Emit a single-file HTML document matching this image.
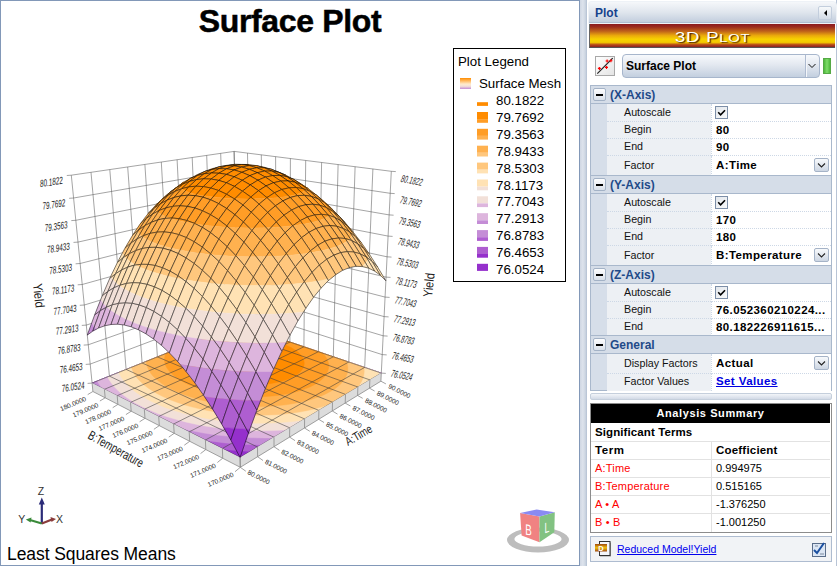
<!DOCTYPE html>
<html><head><meta charset="utf-8">
<style>
*{box-sizing:border-box}
html,body{margin:0;padding:0;width:837px;height:566px;overflow:hidden;background:#fff;font-family:"Liberation Sans",sans-serif}
.abs{position:absolute}
#plot{position:absolute;left:0;top:0;width:580px;height:566px;border:1px solid #8298b8;background:#fff}
#split{position:absolute;left:580px;top:0;width:7px;height:566px;background:linear-gradient(90deg,#cfd7e3 0,#dde3ec 40%,#cdd6e2 75%,#b3c0d2 100%)}
#panel{position:absolute;left:588px;top:0;width:249px;height:566px;background:#fff;border-right:1px solid #b8c4d6}
svg text{font-family:"Liberation Sans",sans-serif}
.g{stroke:#5a5a5a;stroke-width:.55;fill:none}
.fg{stroke:#383838;stroke-width:.55;fill:none}
.bs{stroke:#8a8a8a;stroke-width:.8;fill:none}
.b0{fill:#FF8C00;stroke:#FF8C00;stroke-width:.4}.b1{fill:#FF9D26;stroke:#FF9D26;stroke-width:.4}.b2{fill:#FFB14F;stroke:#FFB14F;stroke-width:.4}.b3{fill:#FFC77D;stroke:#FFC77D;stroke-width:.4}.b4{fill:#FFE2B4;stroke:#FFE2B4;stroke-width:.4}.b5{fill:#F2E0D8;stroke:#F2E0D8;stroke-width:.4}.b6{fill:#DDB5DD;stroke:#DDB5DD;stroke-width:.4}.b7{fill:#C48DD6;stroke:#C48DD6;stroke-width:.4}.b8{fill:#AE5ED0;stroke:#AE5ED0;stroke-width:.4}.b9{fill:#9530CC;stroke:#9530CC;stroke-width:.4}
.s{stroke:#000;stroke-width:.5;stroke-linejoin:round}
.o{fill:none}
.lbl{font-size:11px;color:#222;position:absolute;white-space:nowrap}
.mb{width:13px;height:13px;border:1px solid #a3b2c6;border-radius:2px;background:linear-gradient(#fdfdfe,#d9e0ea)}
.mb:after{content:"";position:absolute;left:2px;top:5px;width:7px;height:2px;background:#000}
.cat{font-size:12px;font-weight:bold;color:#1f4a88;white-space:nowrap}
.pl{font-size:10.7px;color:#111;white-space:nowrap}
.pv{font-size:11.5px;font-weight:bold;letter-spacing:.4px;color:#000;white-space:nowrap}
.ck{width:13px;height:13px;border:1px solid #7d8fa8;background:linear-gradient(135deg,#e3e7ec,#f8f9fa)}
.ddb{width:15px;height:14px;border:1px solid #a5b3c7;border-radius:2px;background:linear-gradient(#f8fafc,#cdd6e3)}
</style></head><body>
<div id="plot"></div>
<svg class="abs" style="left:0;top:0" width="580" height="566" viewBox="0 0 580 566">
<path fill="#fff" d="M71.3 175.2 234.1 151.4 238.2 324.5 92.1 383.1Z"/><path fill="#fff" d="M234.1 151.4 391.3 171.3 381.3 373.1 238.2 324.5Z"/>
<path class="g" d="M92.1 383.1L71.3 175.2"/>
<path class="g" d="M92.1 383.1L238.2 324.5"/>
<path class="g" d="M238.2 324.5L234.1 151.4"/>
<path class="g" d="M238.2 324.5L381.3 373.1"/>
<path class="g" d="M92.1 383.1L87.6 383.4"/>
<path class="g" d="M381.3 373.1L385.8 373.4"/>
<path class="g" d="M109.4 376.1L91 172.3"/>
<path class="g" d="M90.2 364.1L237.8 308.4"/>
<path class="g" d="M250.5 328.7L247.5 153.1"/>
<path class="g" d="M237.8 308.4L382.2 354.6"/>
<path class="g" d="M90.2 364.1L85.7 364.4"/>
<path class="g" d="M382.2 354.6L386.7 354.9"/>
<path class="g" d="M126.1 369.4L109.8 169.6"/>
<path class="g" d="M88.2 344.8L237.4 292.1"/>
<path class="g" d="M263.3 333L261.3 154.8"/>
<path class="g" d="M237.4 292.1L383.1 335.8"/>
<path class="g" d="M88.2 344.8L83.7 345.1"/>
<path class="g" d="M383.1 335.8L387.6 336.1"/>
<path class="g" d="M142.1 363L127.7 167"/>
<path class="g" d="M86.3 325.1L237 275.5"/>
<path class="g" d="M276.4 337.5L275.6 156.7"/>
<path class="g" d="M237 275.5L384.1 316.6"/>
<path class="g" d="M86.3 325.1L81.8 325.4"/>
<path class="g" d="M384.1 316.6L388.6 316.9"/>
<path class="g" d="M157.4 356.9L144.9 164.5"/>
<path class="g" d="M84.3 305L236.6 258.7"/>
<path class="g" d="M289.9 342.1L290.4 158.5"/>
<path class="g" d="M236.6 258.7L385.1 297.1"/>
<path class="g" d="M84.3 305L79.8 305.3"/>
<path class="g" d="M385.1 297.1L389.6 297.4"/>
<path class="g" d="M172.2 351L161.3 162"/>
<path class="g" d="M82.2 284.5L236.2 241.6"/>
<path class="g" d="M303.9 346.8L305.7 160.5"/>
<path class="g" d="M236.2 241.6L386 277.1"/>
<path class="g" d="M82.2 284.5L77.7 284.8"/>
<path class="g" d="M386 277.1L390.5 277.4"/>
<path class="g" d="M186.4 345.3L177.1 159.7"/>
<path class="g" d="M80.1 263.5L235.8 224.1"/>
<path class="g" d="M318.4 351.7L321.6 162.5"/>
<path class="g" d="M235.8 224.1L387 256.8"/>
<path class="g" d="M80.1 263.5L75.6 263.8"/>
<path class="g" d="M387 256.8L391.5 257.1"/>
<path class="g" d="M200.1 339.8L192.2 157.5"/>
<path class="g" d="M78 242.1L235.4 206.4"/>
<path class="g" d="M333.3 356.8L338.1 164.5"/>
<path class="g" d="M235.4 206.4L388.1 236.1"/>
<path class="g" d="M78 242.1L73.5 242.4"/>
<path class="g" d="M388.1 236.1L392.6 236.4"/>
<path class="g" d="M213.2 334.5L206.7 155.4"/>
<path class="g" d="M75.8 220.3L235 188.4"/>
<path class="g" d="M348.8 362L355.1 166.7"/>
<path class="g" d="M235 188.4L389.1 214.9"/>
<path class="g" d="M75.8 220.3L71.3 220.6"/>
<path class="g" d="M389.1 214.9L393.6 215.2"/>
<path class="g" d="M225.9 329.4L220.7 153.4"/>
<path class="g" d="M73.6 198L234.5 170.1"/>
<path class="g" d="M364.7 367.4L372.9 168.9"/>
<path class="g" d="M234.5 170.1L390.2 193.3"/>
<path class="g" d="M73.6 198L69.1 198.3"/>
<path class="g" d="M390.2 193.3L394.7 193.6"/>
<path class="g" d="M238.2 324.5L234.1 151.4"/>
<path class="g" d="M71.3 175.2L234.1 151.4"/>
<path class="g" d="M381.3 373.1L391.3 171.3"/>
<path class="g" d="M234.1 151.4L391.3 171.3"/>
<path class="g" d="M71.3 175.2L66.8 175.5"/>
<path class="g" d="M391.3 171.3L395.8 171.6"/>
<path class="b9" d="M240.1 457.4 381.3 373.1 238.2 324.5 92.1 383.1Z"/>
<path class="b8" d="M92.1 383.1 224.4 449.5 237.6 450.7 250.3 451.4 381.3 373.1 238.2 324.5Z"/>
<path class="b7" d="M92.1 383.1 206.3 440.4 211.4 441.2 224.7 442.9 238.2 444 251.9 444.7 261.1 444.9 381.3 373.1 238.2 324.5Z"/>
<path class="b6" d="M97.1 381.1 99.6 385.1 101.8 388 183.4 428.9 190.6 430.6 202.2 432.8 214.2 434.7 226.4 436.1 238.9 437.2 251.4 437.8 263.9 438 272.8 437.9 381.3 373.1 238.2 324.5Z"/>
<path class="b5" d="M107.6 376.9 108.6 379 111.3 383 114.6 387.1 118.7 391.2 123.5 395.2 128.9 399.1 135.1 402.9 141.9 406.5 149.4 410 157.6 413.4 166.3 416.5 175.6 419.3 185.3 421.9 195.6 424.2 206.1 426.2 217 427.8 228.2 429.1 239.5 430 250.9 430.6 262.2 430.8 273.5 430.6 284.6 430.1 286.1 429.9 381.3 373.1 238.2 324.5Z"/>
<path class="b4" d="M118.9 372.3 119.3 373.4 121.2 377.1 123.8 380.8 127 384.5 130.8 388.1 135.2 391.7 140.3 395.2 146 398.6 152.2 401.8 159.1 405 166.5 407.9 174.4 410.6 182.8 413.1 191.6 415.4 200.8 417.4 210.3 419.2 220 420.6 230 421.8 240.1 422.6 250.3 423.1 260.5 423.3 270.6 423.1 280.5 422.6 290.3 421.8 299.7 420.7 302.3 420.3 378.7 374.6 378.8 373.6 378.7 372.2 238.2 324.5Z"/>
<path class="b3" d="M131.5 367.3 131.8 368.6 133.2 371.9 135 375.1 137.5 378.4 140.4 381.6 143.9 384.8 148 387.9 152.6 391 157.7 393.9 163.3 396.8 169.4 399.5 176 402 183 404.4 190.4 406.6 198.2 408.5 206.3 410.3 214.6 411.8 223.2 413 232 414 240.8 414.7 249.8 415.1 258.7 415.3 267.5 415.1 276.2 414.7 284.8 414 293.1 413 301.1 411.8 308.7 410.3 316 408.6 322.9 406.6 328 404.9 357.3 387.4 359.4 384.9 361.4 381.7 362.9 378.5 363.8 375.2 364.2 372 364.1 368.7 363.7 367.1 238.2 324.5Z"/>
<path class="b2" d="M146.2 361.4 146.2 361.8 146.6 364.5 147.5 367.3 148.8 370.1 150.5 372.9 152.7 375.7 155.4 378.4 158.5 381.1 162.1 383.8 166.1 386.4 170.6 388.8 175.5 391.2 180.8 393.5 186.4 395.6 192.4 397.6 198.8 399.4 205.4 401 212.3 402.5 219.4 403.7 226.7 404.8 234.1 405.6 241.6 406.1 249.1 406.5 256.7 406.6 264.2 406.5 271.5 406.2 278.8 405.6 285.8 404.8 292.6 403.7 299.1 402.5 305.4 401.1 311.3 399.4 316.8 397.6 321.9 395.7 326.6 393.5 330.8 391.3 334.6 388.9 337.9 386.4 340.8 383.8 343.1 381.2 345 378.5 346.4 375.8 347.4 373 347.8 370.2 347.8 367.4 347.4 364.6 346.5 361.9 346.2 361.1 238.2 324.5Z"/>
<path class="b1" d="M252.1 329.2 248.5 329 243.6 328.8 238.8 328.8 234 328.8 229.3 329 226.5 329.2 165.8 353.5 165.3 354.7 164.7 356.9 164.5 359.1 164.6 361.3 165 363.5 165.8 365.8 167 368 168.6 370.3 170.5 372.5 172.8 374.7 175.4 376.9 178.4 379 181.7 381 185.4 383 189.4 384.9 193.7 386.6 198.3 388.3 203.2 389.9 208.3 391.3 213.6 392.5 219.1 393.7 224.8 394.6 230.6 395.4 236.5 396.1 242.5 396.5 248.5 396.8 254.4 396.9 260.4 396.8 266.3 396.5 272 396.1 277.6 395.4 283.1 394.6 288.3 393.7 293.3 392.6 298 391.3 302.5 389.9 306.6 388.3 310.5 386.7 314 384.9 317.1 383 319.9 381.1 322.3 379 324.3 376.9 326 374.8 327.2 372.6 328.1 370.3 328.6 368.1 328.8 365.8 328.6 363.6 328 361.4 327.1 359.1 325.8 357 324.2 354.8 322.8 353.2Z"/>
<path class="b0" d="M280.7 343.1 277.8 342.2 274.7 341.3 271.6 340.5 268.3 339.8 265 339.1 261.6 338.5 258.2 338.1 254.7 337.7 251.2 337.4 247.7 337.1 244.2 337 240.7 337 237.2 337 233.8 337.1 230.3 337.4 227 337.7 223.7 338.1 220.5 338.5 217.4 339.1 214.3 339.7 211.4 340.5 208.6 341.3 206 342.1 203.5 343.1 201.1 344.1 198.9 345.2 196.9 346.4 195.1 347.6 193.5 348.9 192 350.2 190.8 351.6 189.8 353 189.1 354.5 188.5 356 188.2 357.5 188.2 359.1 188.3 360.6 188.8 362.2 189.5 363.8 190.4 365.4 191.6 366.9 193.1 368.5 194.8 370 196.7 371.5 198.9 372.9 201.3 374.3 203.9 375.7 206.8 376.9 209.8 378.1 213 379.2 216.4 380.3 220 381.2 223.7 382.1 227.5 382.8 231.4 383.5 235.4 384 239.4 384.4 243.5 384.7 247.6 384.9 251.7 385 255.8 384.9 259.8 384.7 263.7 384.4 267.6 384 271.3 383.5 275 382.8 278.4 382.1 281.7 381.3 284.8 380.3 287.8 379.3 290.5 378.2 293 377 295.2 375.7 297.2 374.4 299 373 300.5 371.5 301.8 370 302.8 368.5 303.5 367 304 365.4 304.2 363.9 304.2 362.3 303.9 360.7 303.4 359.1 302.6 357.6 301.6 356 300.4 354.5 299 353.1 297.3 351.6 295.4 350.3 293.4 348.9 291.2 347.6 288.8 346.4 286.3 345.3 283.6 344.2Z"/>
<path class="fg" d="M240.1 457.4L92.1 383.1"/>
<path class="fg" d="M240.1 457.4L381.3 373.1"/>
<path class="fg" d="M257.5 447L109.4 376.1"/>
<path class="fg" d="M222.4 448.5L364.7 367.4"/>
<path class="fg" d="M274 437.2L126.1 369.4"/>
<path class="fg" d="M205.4 440L348.8 362"/>
<path class="fg" d="M289.7 427.8L142.1 363"/>
<path class="fg" d="M189.2 431.9L333.3 356.8"/>
<path class="fg" d="M304.6 418.9L157.4 356.9"/>
<path class="fg" d="M173.6 424L318.4 351.7"/>
<path class="fg" d="M318.9 410.4L172.2 351"/>
<path class="fg" d="M158.7 416.5L303.9 346.8"/>
<path class="fg" d="M332.5 402.2L186.4 345.3"/>
<path class="fg" d="M144.3 409.3L289.9 342.1"/>
<path class="fg" d="M345.5 394.4L200.1 339.8"/>
<path class="fg" d="M130.5 402.4L276.4 337.5"/>
<path class="fg" d="M357.9 387L213.2 334.5"/>
<path class="fg" d="M117.2 395.7L263.3 333"/>
<path class="fg" d="M369.9 379.9L225.9 329.4"/>
<path class="fg" d="M104.4 389.3L250.5 328.7"/>
<path class="fg" d="M381.3 373.1L238.2 324.5"/>
<path class="fg" d="M92.1 383.1L238.2 324.5"/>
<path fill="#DCDCDC" d="M92.1 383.1 240.1 457.4 240.3 467.3 92.9 391.5Z"/><path fill="#DCDCDC" d="M240.1 457.4 381.3 373.1 380.9 381.2 240.3 467.3Z"/>
<path class="bs" d="M240.1 457.4L240.3 467.3"/>
<path class="bs" d="M240.1 457.4L240.3 467.3"/>
<path class="bs" d="M240.3 467.3L235 471.7"/>
<path class="bs" d="M240.3 467.3L245.8 471.2"/>
<path class="bs" d="M222.4 448.5L222.7 458.2"/>
<path class="bs" d="M257.5 447L257.6 456.7"/>
<path class="bs" d="M222.7 458.2L217.4 462.5"/>
<path class="bs" d="M257.6 456.7L263 460.5"/>
<path class="bs" d="M205.4 440L205.8 449.6"/>
<path class="bs" d="M274 437.2L274 446.7"/>
<path class="bs" d="M205.8 449.6L200.5 453.6"/>
<path class="bs" d="M274 446.7L279.4 450.3"/>
<path class="bs" d="M189.2 431.9L189.7 441.3"/>
<path class="bs" d="M289.7 427.8L289.6 437.1"/>
<path class="bs" d="M189.7 441.3L184.3 445.2"/>
<path class="bs" d="M289.6 437.1L295 440.6"/>
<path class="bs" d="M173.6 424L174.2 433.3"/>
<path class="bs" d="M304.6 418.9L304.5 428"/>
<path class="bs" d="M174.2 433.3L168.8 437.1"/>
<path class="bs" d="M304.5 428L309.8 431.3"/>
<path class="bs" d="M158.7 416.5L159.3 425.6"/>
<path class="bs" d="M318.9 410.4L318.7 419.3"/>
<path class="bs" d="M159.3 425.6L153.9 429.3"/>
<path class="bs" d="M318.7 419.3L324 422.5"/>
<path class="bs" d="M144.3 409.3L145 418.3"/>
<path class="bs" d="M332.5 402.2L332.3 411"/>
<path class="bs" d="M145 418.3L139.6 421.8"/>
<path class="bs" d="M332.3 411L337.5 414.1"/>
<path class="bs" d="M130.5 402.4L131.2 411.2"/>
<path class="bs" d="M345.5 394.4L345.2 403.1"/>
<path class="bs" d="M131.2 411.2L125.9 414.6"/>
<path class="bs" d="M345.2 403.1L350.4 406"/>
<path class="bs" d="M117.2 395.7L117.9 404.4"/>
<path class="bs" d="M357.9 387L357.6 395.5"/>
<path class="bs" d="M117.9 404.4L112.7 407.7"/>
<path class="bs" d="M357.6 395.5L362.7 398.3"/>
<path class="bs" d="M104.4 389.3L105.2 397.8"/>
<path class="bs" d="M369.9 379.9L369.5 388.2"/>
<path class="bs" d="M105.2 397.8L99.9 401"/>
<path class="bs" d="M369.5 388.2L374.6 391"/>
<path class="bs" d="M92.1 383.1L92.9 391.5"/>
<path class="bs" d="M381.3 373.1L380.9 381.2"/>
<path class="bs" d="M92.9 391.5L87.7 394.6"/>
<path class="bs" d="M380.9 381.2L385.9 383.9"/>
<path class="bs" d="M92.9 391.5L240.3 467.3"/>
<path class="bs" d="M240.3 467.3L380.9 381.2"/>
<path class="b1" d="M161.9 199.6 169.6 192.5 163.4 198 156.8 204.1 156.5 204.4Z"/>
<path class="b2" d="M156.8 204.1 155.8 205 156.5 204.4Z"/>
<path class="s o" d="M161.9 199.6 169.6 192.5 163.4 198 155.8 205Z"/>
<path class="b0" d="M181.2 184 183.7 182.2 182.2 183.3Z"/>
<path class="b1" d="M176 187.9 181.2 184 182.2 183.3 177.2 186.8 169.6 192.5Z"/>
<path class="s o" d="M176 187.9 183.7 182.2 177.2 186.8 169.6 192.5Z"/>
<path class="b1" d="M155.2 207.1 161.9 199.6 156.5 204.4Z"/>
<path class="b2" d="M154.2 208.2 155.2 207.1 156.5 204.4 155.8 205 148.1 213.6Z"/>
<path class="s o" d="M154.2 208.2 161.9 199.6 155.8 205 148.1 213.6Z"/>
<path class="b1 s" d="M168.3 195 176 187.9 169.6 192.5 161.9 199.6Z"/>
<path class="b2 s" d="M146.5 218.3 154.2 208.2 148.1 213.6 140.4 223.6Z"/>
<path class="b0" d="M182.7 184.2 190.4 178.4 183.7 182.2 181.2 184 179.9 185.7Z"/>
<path class="b1" d="M181.2 184 176 187.9 179.9 185.7Z"/>
<path class="s o" d="M182.7 184.2 190.4 178.4 183.7 182.2 176 187.9Z"/>
<path class="b2" d="M138.7 229.9 146.5 218.3 140.4 223.6 136.9 228.7 137.4 231.1Z"/>
<path class="b3" d="M136.9 228.7 132.7 235.1 137.4 231.1Z"/>
<path class="s o" d="M138.7 229.9 146.5 218.3 140.4 223.6 132.7 235.1Z"/>
<path class="b1" d="M160.6 203.7 168.3 195 161.9 199.6 155.2 207.1 155.2 207.5Z"/>
<path class="b2" d="M155.2 207.1 154.2 208.2 155.2 207.5Z"/>
<path class="s o" d="M160.6 203.7 168.3 195 161.9 199.6 154.2 208.2Z"/>
<path class="b0 s" d="M197.2 175.6 204.8 171.4 198 174.2 190.4 178.4Z"/>
<path class="b0 s" d="M211.9 169.5 219.4 166.7 212.4 168.6 204.8 171.4Z"/>
<path class="b0 s" d="M226.7 165.8 234.1 164.4 226.9 165.3 219.4 166.7Z"/>
<path class="b2" d="M137.6 231.7 138.7 229.9 137.4 231.1Z"/>
<path class="b3" d="M131 243 137.6 231.7 137.4 231.1 132.7 235.1 125 248.1Z"/>
<path class="s o" d="M131 243 138.7 229.9 132.7 235.1 125 248.1Z"/>
<path class="b0 s" d="M241.5 164.5 248.8 164.5 241.4 164.4 234.1 164.4Z"/>
<path class="b0" d="M179.9 186.7 182.7 184.2 179.9 185.7Z"/>
<path class="b1" d="M174.9 191.4 179.9 186.7 179.9 185.7 176 187.9 168.3 195Z"/>
<path class="s o" d="M174.9 191.4 182.7 184.2 176 187.9 168.3 195Z"/>
<path class="b1" d="M155.9 209.8 160.6 203.7 155.2 207.5Z"/>
<path class="b2" d="M152.8 213.9 155.9 209.8 155.2 207.5 154.2 208.2 146.5 218.3Z"/>
<path class="s o" d="M152.8 213.9 160.6 203.7 154.2 208.2 146.5 218.3Z"/>
<path class="b3" d="M124.2 255.9 131 243 125 248.1 122.5 252.8Z"/>
<path class="b4" d="M123.2 257.7 124.2 255.9 122.5 252.8 117.4 262.5Z"/>
<path class="s o" d="M123.2 257.7 131 243 125 248.1 117.4 262.5Z"/>
<path class="b0 s" d="M189.5 181.4 197.2 175.6 190.4 178.4 182.7 184.2Z"/>
<path class="b4" d="M115.5 273.8 123.2 257.7 117.4 262.5 110.7 276.5 111.2 277.3Z"/>
<path class="b5" d="M110.7 276.5 109.7 278.5 111.2 277.3Z"/>
<path class="s o" d="M115.5 273.8 123.2 257.7 117.4 262.5 109.7 278.5Z"/>
<path class="b0 s" d="M279 172.4 285.8 175.1 278.1 171.9 271.2 169.2Z"/>
<path class="b2 s" d="M338.9 216.2 344.9 222.4 336.8 214 330.8 207.7Z"/>
<path class="b0 s" d="M204.2 173.8 211.9 169.5 204.8 171.4 197.2 175.6Z"/>
<path class="b6" d="M94.3 327.1 100.3 310.5 94.7 314.8 91.6 323.4Z"/>
<path class="b7" d="M92.8 331.1 94.3 327.1 91.6 323.4 87.3 335.1Z"/>
<path class="s o" d="M92.8 331.1 100.3 310.5 94.7 314.8 87.3 335.1Z"/>
<path class="b2 s" d="M144.9 225.6 152.8 213.9 146.5 218.3 138.7 229.9Z"/>
<path class="b1 s" d="M167.1 200.1 174.9 191.4 168.3 195 160.6 203.7Z"/>
<path class="b4" d="M112.9 279.8 115.5 273.8 111.2 277.3Z"/>
<path class="b5" d="M107.9 291.4 112.9 279.8 111.2 277.3 109.7 278.5 102.2 295.9Z"/>
<path class="s o" d="M107.9 291.4 115.5 273.8 109.7 278.5 102.2 295.9Z"/>
<path class="b5" d="M103.1 303.5 107.9 291.4 102.2 295.9 100.5 300Z"/>
<path class="b6" d="M100.3 310.5 103.1 303.5 100.5 300 94.7 314.8Z"/>
<path class="s o" d="M100.3 310.5 107.9 291.4 102.2 295.9 94.7 314.8Z"/>
<path class="b0 s" d="M264.1 167.8 271.2 169.2 263.5 167 256.4 165.6Z"/>
<path class="b0 s" d="M219.1 168.6 226.7 165.8 219.4 166.7 211.9 169.5Z"/>
<path class="b0 s" d="M249.1 165.6 256.4 165.6 248.8 164.5 241.5 164.5Z"/>
<path class="b0 s" d="M234.1 165.9 241.5 164.5 234.1 164.4 226.7 165.8Z"/>
<path class="b0" d="M301.7 184.8 304.8 186.6 302.8 185 300.4 183.4 293.7 179.4Z"/>
<path class="b1" d="M304.8 186.6 308.3 188.7 302.8 185Z"/>
<path class="s o" d="M301.7 184.8 308.3 188.7 300.4 183.4 293.7 179.4Z"/>
<path class="b0" d="M181.7 188.7 189.5 181.4 182.7 184.2 179.9 186.7 181.2 188.9Z"/>
<path class="b1" d="M179.9 186.7 174.9 191.4 181.2 188.9Z"/>
<path class="s o" d="M181.7 188.7 189.5 181.4 182.7 184.2 174.9 191.4Z"/>
<path class="b2" d="M139.7 234.5 144.9 225.6 138.7 229.9 137.6 231.7Z"/>
<path class="b3" d="M137.1 238.9 139.7 234.5 137.6 231.7 131 243Z"/>
<path class="s o" d="M137.1 238.9 144.9 225.6 138.7 229.9 131 243Z"/>
<path class="b2" d="M347.1 225.8 351.1 229.9 350.3 228.7 344.9 222.4 338.9 216.2Z"/>
<path class="b3" d="M351.1 229.9 353 231.9 350.3 228.7Z"/>
<path class="s o" d="M347.1 225.8 353 231.9 344.9 222.4 338.9 216.2Z"/>
<path class="b1" d="M324.5 202.6 330.7 207.6 330.7 207.6 322.7 200.3 316.4 195.1Z"/>
<path class="b2" d="M330.7 207.6 330.8 207.7 330.7 207.6Z"/>
<path class="s o" d="M324.5 202.6 330.8 207.7 322.7 200.3 316.4 195.1Z"/>
<path class="b1" d="M159.3 210.4 167.1 200.1 160.6 203.7 155.9 209.8 157.2 211.5Z"/>
<path class="b2" d="M155.9 209.8 152.8 213.9 157.2 211.5Z"/>
<path class="s o" d="M159.3 210.4 167.1 200.1 160.6 203.7 152.8 213.9Z"/>
<path class="b0 s" d="M286.9 176.7 293.7 179.4 285.8 175.1 279 172.4Z"/>
<path class="b0 s" d="M196.5 179.6 204.2 173.8 197.2 175.6 189.5 181.4Z"/>
<path class="b3" d="M129.3 253.7 137.1 238.9 131 243 124.2 255.9 124.8 256.7Z"/>
<path class="b4" d="M124.2 255.9 123.2 257.7 124.8 256.7Z"/>
<path class="s o" d="M129.3 253.7 137.1 238.9 131 243 123.2 257.7Z"/>
<path class="b0 s" d="M271.9 171.1 279 172.4 271.2 169.2 264.1 167.8Z"/>
<path class="b0 s" d="M211.5 173 219.1 168.6 211.9 169.5 204.2 173.8Z"/>
<path class="b2" d="M351.1 229.9 347.1 225.8 352 232.2Z"/>
<path class="b3" d="M355.4 236.6 361.2 242.5 353 231.9 351.1 229.9 352 232.2Z"/>
<path class="s o" d="M355.4 236.6 361.2 242.5 353 231.9 347.1 225.8Z"/>
<path class="b0 s" d="M256.8 167.8 264.1 167.8 256.4 165.6 249.1 165.6Z"/>
<path class="b0" d="M304.8 186.6 301.7 184.8 305.7 187.9Z"/>
<path class="b1" d="M309.8 191.3 316.4 195.1 308.3 188.7 304.8 186.6 305.7 187.9Z"/>
<path class="s o" d="M309.8 191.3 316.4 195.1 308.3 188.7 301.7 184.8Z"/>
<path class="b0 s" d="M226.6 168.8 234.1 165.9 226.7 165.8 219.1 168.6Z"/>
<path class="b0 s" d="M241.7 167.1 249.1 165.6 241.5 164.5 234.1 165.9Z"/>
<path class="b0" d="M181.4 189.1 181.7 188.7 181.2 188.9Z"/>
<path class="b1" d="M173.9 197.5 181.4 189.1 181.2 188.9 174.9 191.4 167.1 200.1Z"/>
<path class="s o" d="M173.9 197.5 181.7 188.7 174.9 191.4 167.1 200.1Z"/>
<path class="b3" d="M126.9 258.9 129.3 253.7 124.8 256.7Z"/>
<path class="b4" d="M121.6 270 126.9 258.9 124.8 256.7 123.2 257.7 115.5 273.8Z"/>
<path class="s o" d="M121.6 270 129.3 253.7 123.2 257.7 115.5 273.8Z"/>
<path class="b1" d="M158 212.3 159.3 210.4 157.2 211.5Z"/>
<path class="b2" d="M151.4 222.3 158 212.3 157.2 211.5 152.8 213.9 144.9 225.6Z"/>
<path class="s o" d="M151.4 222.3 159.3 210.4 152.8 213.9 144.9 225.6Z"/>
<path class="b1" d="M330.7 207.6 324.5 202.6 332.2 210.7Z"/>
<path class="b2" d="M332.7 211.3 338.9 216.2 330.8 207.7 330.7 207.6 332.2 210.7Z"/>
<path class="s o" d="M332.7 211.3 338.9 216.2 330.8 207.7 324.5 202.6Z"/>
<path class="b6" d="M98.6 328 106.2 307.2 100.3 310.5 94.3 327.1 96.2 329.3Z"/>
<path class="b7" d="M94.3 327.1 92.8 331.1 96.2 329.3Z"/>
<path class="s o" d="M98.6 328 106.2 307.2 100.3 310.5 92.8 331.1Z"/>
<path class="b4" d="M116 283 121.6 270 115.5 273.8 112.9 279.8Z"/>
<path class="b5" d="M113.9 287.8 116 283 112.9 279.8 107.9 291.4Z"/>
<path class="s o" d="M113.9 287.8 121.6 270 115.5 273.8 107.9 291.4Z"/>
<path class="b5" d="M106.3 307 113.9 287.8 107.9 291.4 103.1 303.5Z"/>
<path class="b6" d="M106.2 307.2 106.3 307 103.1 303.5 100.3 310.5Z"/>
<path class="s o" d="M106.2 307.2 113.9 287.8 107.9 291.4 100.3 310.5Z"/>
<path class="b3" d="M363.7 248.4 368.5 253.3 368.4 252.8 361.2 242.5 355.4 236.6Z"/>
<path class="b4" d="M368.5 253.3 369.4 254.2 368.4 252.8Z"/>
<path class="s o" d="M363.7 248.4 369.4 254.2 361.2 242.5 355.4 236.6Z"/>
<path class="b0 s" d="M294.9 182.2 301.7 184.8 293.7 179.4 286.9 176.7Z"/>
<path class="b0 s" d="M188.7 186.9 196.5 179.6 189.5 181.4 181.7 188.7Z"/>
<path class="b2" d="M143.5 235.7 151.4 222.3 144.9 225.6 139.7 234.5 141.9 236.5Z"/>
<path class="b3" d="M139.7 234.5 137.1 238.9 141.9 236.5Z"/>
<path class="s o" d="M143.5 235.7 151.4 222.3 144.9 225.6 137.1 238.9Z"/>
<path class="b0 s" d="M279.9 175.4 286.9 176.7 279 172.4 271.9 171.1Z"/>
<path class="b3" d="M368.5 253.3 363.7 248.4 368.8 256.4Z"/>
<path class="b4" d="M372 261.3 377.6 267 369.4 254.2 368.5 253.3 368.8 256.4Z"/>
<path class="s o" d="M372 261.3 377.6 267 369.4 254.2 363.7 248.4Z"/>
<path class="b2 s" d="M341 221 347.1 225.8 338.9 216.2 332.7 211.3Z"/>
<path class="b1 s" d="M318 198.8 324.5 202.6 316.4 195.1 309.8 191.3Z"/>
<path class="b1 s" d="M166 207.9 173.9 197.5 167.1 200.1 159.3 210.4Z"/>
<path class="b0 s" d="M203.7 178.8 211.5 173 204.2 173.8 196.5 179.6Z"/>
<path class="b0 s" d="M264.7 171.1 271.9 171.1 264.1 167.8 256.8 167.8Z"/>
<path class="b0 s" d="M218.9 173.2 226.6 168.8 219.1 168.6 211.5 173Z"/>
<path class="b4" d="M380.4 275.3 383.3 278.3 383.3 276.5 377.6 267 372 261.3Z"/>
<path class="b5" d="M383.3 278.3 385.9 280.8 383.3 276.5Z"/>
<path class="s o" d="M380.4 275.3 385.9 280.8 377.6 267 372 261.3Z"/>
<path class="b0 s" d="M249.4 169.3 256.8 167.8 249.1 165.6 241.7 167.1Z"/>
<path class="b0 s" d="M234.1 170 241.7 167.1 234.1 165.9 226.6 168.8Z"/>
<path class="b2" d="M142.7 237.1 143.5 235.7 141.9 236.5Z"/>
<path class="b3" d="M135.7 250.6 142.7 237.1 141.9 236.5 137.1 238.9 129.3 253.7Z"/>
<path class="s o" d="M135.7 250.6 143.5 235.7 137.1 238.9 129.3 253.7Z"/>
<path class="b0" d="M303.1 188.7 305.5 189.6 305.7 187.9 301.7 184.8 294.9 182.2Z"/>
<path class="b1" d="M305.5 189.6 309.8 191.3 305.7 187.9Z"/>
<path class="s o" d="M303.1 188.7 309.8 191.3 301.7 184.8 294.9 182.2Z"/>
<path class="b0" d="M185.1 191 188.7 186.9 181.7 188.7 181.4 189.1Z"/>
<path class="b1" d="M180.8 195.9 185.1 191 181.4 189.1 173.9 197.5Z"/>
<path class="s o" d="M180.8 195.9 188.7 186.9 181.7 188.7 173.9 197.5Z"/>
<path class="b2" d="M349.4 231.8 352.1 234 352 232.2 347.1 225.8 341 221Z"/>
<path class="b3" d="M352.1 234 355.4 236.6 352 232.2Z"/>
<path class="s o" d="M349.4 231.8 355.4 236.6 347.1 225.8 341 221Z"/>
<path class="b1" d="M161.5 214.6 166 207.9 159.3 210.4 158 212.3Z"/>
<path class="b2" d="M158.1 219.8 161.5 214.6 158 212.3 151.4 222.3Z"/>
<path class="s o" d="M158.1 219.8 166 207.9 159.3 210.4 151.4 222.3Z"/>
<path class="b3" d="M130.4 261.7 135.7 250.6 129.3 253.7 126.9 258.9Z"/>
<path class="b4" d="M127.8 267.1 130.4 261.7 126.9 258.9 121.6 270Z"/>
<path class="s o" d="M127.8 267.1 135.7 250.6 129.3 253.7 121.6 270Z"/>
<path class="b1" d="M326.3 207.5 332.2 210.9 332.2 210.7 324.5 202.6 318 198.8Z"/>
<path class="b2" d="M332.2 210.9 332.7 211.3 332.2 210.7Z"/>
<path class="s o" d="M326.3 207.5 332.7 211.3 324.5 202.6 318 198.8Z"/>
<path class="b0 s" d="M288 180.9 294.9 182.2 286.9 176.7 279.9 175.4Z"/>
<path class="b0 s" d="M195.9 186.2 203.7 178.8 196.5 179.6 188.7 186.9Z"/>
<path class="b4" d="M120.1 285.2 127.8 267.1 121.6 270 116 283 119 285.6Z"/>
<path class="b5" d="M116 283 113.9 287.8 119 285.6Z"/>
<path class="s o" d="M120.1 285.2 127.8 267.1 121.6 270 113.9 287.8Z"/>
<path class="b5" d="M110.3 310.3 112.3 304.7 106.4 307.1Z"/>
<path class="b6" d="M104.7 325.8 110.3 310.3 106.4 307.1 106.2 307.2 98.6 328Z"/>
<path class="s o" d="M104.7 325.8 112.3 304.7 106.2 307.2 98.6 328Z"/>
<path class="b4" d="M119.7 286.1 120.1 285.2 119 285.6Z"/>
<path class="b5" d="M112.3 304.7 119.7 286.1 119 285.6 113.9 287.8 106.3 307 106.4 307.1Z"/>
<path class="b6" d="M106.3 307 106.2 307.2 106.4 307.1Z"/>
<path class="s o" d="M112.3 304.7 120.1 285.2 113.9 287.8 106.2 307.2Z"/>
<path class="b2" d="M352.1 234 349.4 231.8 351.9 235.4Z"/>
<path class="b3" d="M357.7 243.8 363.7 248.4 355.4 236.6 352.1 234 351.9 235.4Z"/>
<path class="s o" d="M357.7 243.8 363.7 248.4 355.4 236.6 349.4 231.8Z"/>
<path class="b0 s" d="M272.7 175.6 279.9 175.4 271.9 171.1 264.7 171.1Z"/>
<path class="b0 s" d="M211.1 179.1 218.9 173.2 211.5 173 203.7 178.8Z"/>
<path class="b2 s" d="M150.1 233.4 158.1 219.8 151.4 222.3 143.5 235.7Z"/>
<path class="b1 s" d="M172.9 206.3 180.8 195.9 173.9 197.5 166 207.9Z"/>
<path class="b0" d="M305.5 189.6 303.1 188.7 305 190.4Z"/>
<path class="b1" d="M311.4 196.4 318 198.8 309.8 191.3 305.5 189.6 305 190.4Z"/>
<path class="s o" d="M311.4 196.4 318 198.8 309.8 191.3 303.1 188.7Z"/>
<path class="b0 s" d="M257.3 172.7 264.7 171.1 256.8 167.8 249.4 169.3Z"/>
<path class="b0 s" d="M226.5 174.4 234.1 170 226.6 168.8 218.9 173.2Z"/>
<path class="b0 s" d="M241.9 172.3 249.4 169.3 241.7 167.1 234.1 170Z"/>
<path class="b1" d="M332.2 210.9 326.3 207.5 331.4 213.5Z"/>
<path class="b2" d="M334.7 217.4 341 221 332.7 211.3 332.2 210.9 331.4 213.5Z"/>
<path class="s o" d="M334.7 217.4 341 221 332.7 211.3 326.3 207.5Z"/>
<path class="b3" d="M366.2 256.9 368.4 258.6 368.8 256.4 363.7 248.4 357.7 243.8Z"/>
<path class="b4" d="M368.4 258.6 372 261.3 368.8 256.4Z"/>
<path class="s o" d="M366.2 256.9 372 261.3 363.7 248.4 357.7 243.8Z"/>
<path class="b2" d="M146.9 239.6 150.1 233.4 143.5 235.7 142.7 237.1Z"/>
<path class="b3" d="M142.2 248.5 146.9 239.6 142.7 237.1 135.7 250.6Z"/>
<path class="s o" d="M142.2 248.5 150.1 233.4 143.5 235.7 135.7 250.6Z"/>
<path class="b0" d="M190.1 192.8 195.9 186.2 188.7 186.9 185.1 191Z"/>
<path class="b1" d="M188 195.2 190.1 192.8 185.1 191 180.8 195.9Z"/>
<path class="s o" d="M188 195.2 195.9 186.2 188.7 186.9 180.8 195.9Z"/>
<path class="b0 s" d="M296.2 187.5 303.1 188.7 294.9 182.2 288 180.9Z"/>
<path class="b3" d="M368.4 258.6 366.2 256.9 367.9 259.8Z"/>
<path class="b4" d="M374.6 271.1 380.4 275.3 372 261.3 368.4 258.6 367.9 259.8Z"/>
<path class="s o" d="M374.6 271.1 380.4 275.3 372 261.3 366.2 256.9Z"/>
<path class="b1" d="M166.1 216.7 172.9 206.3 166 207.9 161.5 214.6Z"/>
<path class="b2" d="M164.9 218.4 166.1 216.7 161.5 214.6 158.1 219.8Z"/>
<path class="s o" d="M164.9 218.4 172.9 206.3 166 207.9 158.1 219.8Z"/>
<path class="b2 s" d="M343.1 228.4 349.4 231.8 341 221 334.7 217.4Z"/>
<path class="b1 s" d="M319.7 205.2 326.3 207.5 318 198.8 311.4 196.4Z"/>
<path class="b0 s" d="M203.3 186.6 211.1 179.1 203.7 178.8 195.9 186.2Z"/>
<path class="b0 s" d="M280.8 181.1 288 180.9 279.9 175.4 272.7 175.6Z"/>
<path class="b3" d="M134.7 264.4 142.2 248.5 135.7 250.6 130.4 261.7Z"/>
<path class="b4" d="M134.3 265.2 134.7 264.4 130.4 261.7 127.8 267.1Z"/>
<path class="s o" d="M134.3 265.2 142.2 248.5 135.7 250.6 127.8 267.1Z"/>
<path class="b0 s" d="M218.7 180.4 226.5 174.4 218.9 173.2 211.1 179.1Z"/>
<path class="b0 s" d="M265.4 177.1 272.7 175.6 264.7 171.1 257.3 172.7Z"/>
<path class="b4 s" d="M126.5 283.4 134.3 265.2 127.8 267.1 120.1 285.2Z"/>
<path class="b0 s" d="M234.2 176.8 241.9 172.3 234.1 170 226.5 174.4Z"/>
<path class="b0 s" d="M249.8 175.7 257.3 172.7 249.4 169.3 241.9 172.3Z"/>
<path class="b5" d="M115 313.5 118.7 303.2 112.3 304.7 110.3 310.3Z"/>
<path class="b6" d="M111 324.5 115 313.5 110.3 310.3 104.7 325.8Z"/>
<path class="s o" d="M111 324.5 118.7 303.2 112.3 304.7 104.7 325.8Z"/>
<path class="b4" d="M124.3 289 126.5 283.4 120.1 285.2 119.7 286.1Z"/>
<path class="b5" d="M118.7 303.2 124.3 289 119.7 286.1 112.3 304.7Z"/>
<path class="s o" d="M118.7 303.2 126.5 283.4 120.1 285.2 112.3 304.7Z"/>
<path class="b1 s" d="M180 205.8 188 195.2 180.8 195.9 172.9 206.3Z"/>
<path class="b2" d="M351.9 235.4 349.4 231.8 343.1 228.4 350.2 238.4Z"/>
<path class="b3" d="M351.6 240.5 357.7 243.8 351.9 235.4 350.2 238.4Z"/>
<path class="s o" d="M351.6 240.5 357.7 243.8 349.4 231.8 343.1 228.4Z"/>
<path class="b2 s" d="M157 232.1 164.9 218.4 158.1 219.8 150.1 233.4Z"/>
<path class="b0" d="M305 190.4 303.1 188.7 296.2 187.5 301.6 192.6Z"/>
<path class="b1" d="M304.5 195.3 311.4 196.4 305 190.4 301.6 192.6Z"/>
<path class="s o" d="M304.5 195.3 311.4 196.4 303.1 188.7 296.2 187.5Z"/>
<path class="b1" d="M328.2 215.1 329.5 215.6 331.4 213.5 326.3 207.5 319.7 205.2Z"/>
<path class="b2" d="M329.5 215.6 334.7 217.4 331.4 213.5Z"/>
<path class="s o" d="M328.2 215.1 334.7 217.4 326.3 207.5 319.7 205.2Z"/>
<path class="b0" d="M196.4 194.4 203.3 186.6 195.9 186.2 190.1 192.8Z"/>
<path class="b1" d="M195.3 195.7 196.4 194.4 190.1 192.8 188 195.2Z"/>
<path class="s o" d="M195.3 195.7 203.3 186.6 195.9 186.2 188 195.2Z"/>
<path class="b0 s" d="M289.1 187.8 296.2 187.5 288 180.9 280.8 181.1Z"/>
<path class="b3 s" d="M360.1 253.8 366.2 256.9 357.7 243.8 351.6 240.5Z"/>
<path class="b2" d="M151.8 242 157 232.1 150.1 233.4 146.9 239.6Z"/>
<path class="b3" d="M149 247.4 151.8 242 146.9 239.6 142.2 248.5Z"/>
<path class="s o" d="M149 247.4 157 232.1 150.1 233.4 142.2 248.5Z"/>
<path class="b1" d="M172 218 180 205.8 172.9 206.3 166.1 216.7 169.9 218.1Z"/>
<path class="b2" d="M166.1 216.7 164.9 218.4 169.9 218.1Z"/>
<path class="s o" d="M172 218 180 205.8 172.9 206.3 164.9 218.4Z"/>
<path class="b0 s" d="M210.8 188 218.7 180.4 211.1 179.1 203.3 186.6Z"/>
<path class="b0 s" d="M273.5 182.7 280.8 181.1 272.7 175.6 265.4 177.1Z"/>
<path class="b1 s" d="M312.9 204.2 319.7 205.2 311.4 196.4 304.5 195.3Z"/>
<path class="b3" d="M367.9 259.8 366.2 256.9 360.1 253.8 365.7 263.1Z"/>
<path class="b4" d="M368.7 268.2 374.6 271.1 367.9 259.8 365.7 263.1Z"/>
<path class="s o" d="M368.7 268.2 374.6 271.1 366.2 256.9 360.1 253.8Z"/>
<path class="b1" d="M329.5 215.6 328.2 215.1 328.9 216.1Z"/>
<path class="b2" d="M336.7 226.3 343.1 228.4 334.7 217.4 329.5 215.6 328.9 216.1Z"/>
<path class="s o" d="M336.7 226.3 343.1 228.4 334.7 217.4 328.2 215.1Z"/>
<path class="b0 s" d="M226.5 182.8 234.2 176.8 226.5 174.4 218.7 180.4Z"/>
<path class="b0 s" d="M257.9 180.2 265.4 177.1 257.3 172.7 249.8 175.7Z"/>
<path class="b3" d="M141.1 264.3 149 247.4 142.2 248.5 134.7 264.4 135.8 265Z"/>
<path class="b4" d="M134.7 264.4 134.3 265.2 135.8 265Z"/>
<path class="s o" d="M141.1 264.3 149 247.4 142.2 248.5 134.3 265.2Z"/>
<path class="b0 s" d="M242.2 180.3 249.8 175.7 241.9 172.3 234.2 176.8Z"/>
<path class="b3" d="M139.9 267 141.1 264.3 135.8 265Z"/>
<path class="b4" d="M133.1 282.7 139.9 267 135.8 265 134.3 265.2 126.5 283.4Z"/>
<path class="s o" d="M133.1 282.7 141.1 264.3 134.3 265.2 126.5 283.4Z"/>
<path class="b1 s" d="M187.4 206.4 195.3 195.7 188 195.2 180 205.8Z"/>
<path class="b5" d="M120.3 316.6 125.3 302.7 118.7 303.2 115 313.5Z"/>
<path class="b6" d="M117.5 324.2 120.3 316.6 115 313.5 111 324.5Z"/>
<path class="s o" d="M117.5 324.2 125.3 302.7 118.7 303.2 111 324.5Z"/>
<path class="b0" d="M301.6 192.6 296.2 187.5 289.1 187.8 296.3 194.5Z"/>
<path class="b1" d="M297.5 195.6 304.5 195.3 301.6 192.6 296.3 194.5Z"/>
<path class="s o" d="M297.5 195.6 304.5 195.3 296.2 187.5 289.1 187.8Z"/>
<path class="b1" d="M171.6 218.7 172 218 169.9 218.1Z"/>
<path class="b2" d="M164 231.9 171.6 218.7 169.9 218.1 164.9 218.4 157 232.1Z"/>
<path class="s o" d="M164 231.9 172 218 164.9 218.4 157 232.1Z"/>
<path class="b4" d="M129.5 291.9 133.1 282.7 126.5 283.4 124.3 289Z"/>
<path class="b5" d="M125.3 302.7 129.5 291.9 124.3 289 118.7 303.2Z"/>
<path class="s o" d="M125.3 302.7 133.1 282.7 126.5 283.4 118.7 303.2Z"/>
<path class="b2" d="M345.2 238.5 348.9 239.7 350.2 238.4 343.1 228.4 336.7 226.3Z"/>
<path class="b3" d="M348.9 239.7 351.6 240.5 350.2 238.4Z"/>
<path class="s o" d="M345.2 238.5 351.6 240.5 343.1 228.4 336.7 226.3Z"/>
<path class="b1 s" d="M321.5 214.3 328.2 215.1 319.7 205.2 312.9 204.2Z"/>
<path class="b0" d="M204.1 195.8 210.8 188 203.3 186.6 196.4 194.4Z"/>
<path class="b1" d="M202.9 197.2 204.1 195.8 196.4 194.4 195.3 195.7Z"/>
<path class="s o" d="M202.9 197.2 210.8 188 203.3 186.6 195.3 195.7Z"/>
<path class="b0 s" d="M281.8 189.5 289.1 187.8 280.8 181.1 273.5 182.7Z"/>
<path class="b0 s" d="M218.6 190.5 226.5 182.8 218.7 180.4 210.8 188Z"/>
<path class="b2" d="M157.6 244.2 164 231.9 157 232.1 151.8 242Z"/>
<path class="b3" d="M156 247.3 157.6 244.2 151.8 242 149 247.4Z"/>
<path class="s o" d="M156 247.3 164 231.9 157 232.1 149 247.4Z"/>
<path class="b0 s" d="M266.1 185.9 273.5 182.7 265.4 177.1 257.9 180.2Z"/>
<path class="b2" d="M348.9 239.7 345.2 238.5 347 241.3Z"/>
<path class="b3" d="M353.9 252 360.1 253.8 351.6 240.5 348.9 239.7 347 241.3Z"/>
<path class="s o" d="M353.9 252 360.1 253.8 351.6 240.5 345.2 238.5Z"/>
<path class="b1 s" d="M179.3 218.7 187.4 206.4 180 205.8 172 218Z"/>
<path class="b0 s" d="M234.4 186.4 242.2 180.3 234.2 176.8 226.5 182.8Z"/>
<path class="b0 s" d="M250.3 184.9 257.9 180.2 249.8 175.7 242.2 180.3Z"/>
<path class="b1 s" d="M306 204.7 312.9 204.2 304.5 195.3 297.5 195.6Z"/>
<path class="b1" d="M328.9 216.1 328.2 215.1 321.5 214.3 324.6 218.5Z"/>
<path class="b2" d="M330 225.5 336.7 226.3 328.9 216.1 324.6 218.5Z"/>
<path class="s o" d="M330 225.5 336.7 226.3 328.2 215.1 321.5 214.3Z"/>
<path class="b3 s" d="M148 264.4 156 247.3 149 247.4 141.1 264.3Z"/>
<path class="b3" d="M365.7 263.1 360.1 253.8 353.9 252 362.3 266.2Z"/>
<path class="b4" d="M362.5 266.6 368.7 268.2 365.7 263.1 362.3 266.2Z"/>
<path class="s o" d="M362.5 266.6 368.7 268.2 360.1 253.8 353.9 252Z"/>
<path class="b1 s" d="M194.9 208 202.9 197.2 195.3 195.7 187.4 206.4Z"/>
<path class="b0" d="M296.3 194.5 289.1 187.8 281.8 189.5 288.8 196.1Z"/>
<path class="b1" d="M290.3 197.5 297.5 195.6 296.3 194.5 288.8 196.1Z"/>
<path class="s o" d="M290.3 197.5 297.5 195.6 289.1 187.8 281.8 189.5Z"/>
<path class="b3" d="M145.8 269.5 148 264.4 141.1 264.3 139.9 267Z"/>
<path class="b4" d="M140 283 145.8 269.5 139.9 267 133.1 282.7Z"/>
<path class="s o" d="M140 283 148 264.4 141.1 264.3 133.1 282.7Z"/>
<path class="b1" d="M178.3 220.6 179.3 218.7 172 218 171.6 218.7Z"/>
<path class="b2" d="M171.3 232.7 178.3 220.6 171.6 218.7 164 231.9Z"/>
<path class="s o" d="M171.3 232.7 179.3 218.7 172 218 164 231.9Z"/>
<path class="b5" d="M126.2 319.6 132.1 303.2 125.3 302.7 120.3 316.6Z"/>
<path class="b6" d="M124.2 325 126.2 319.6 120.3 316.6 117.5 324.2Z"/>
<path class="s o" d="M124.2 325 132.1 303.2 125.3 302.7 117.5 324.2Z"/>
<path class="b4" d="M135.5 294.6 140 283 133.1 282.7 129.5 291.9Z"/>
<path class="b5" d="M132.1 303.2 135.5 294.6 129.5 291.9 125.3 302.7Z"/>
<path class="s o" d="M132.1 303.2 140 283 133.1 282.7 125.3 302.7Z"/>
<path class="b0" d="M213 197 218.6 190.5 210.8 188 204.1 195.8Z"/>
<path class="b1" d="M210.6 199.8 213 197 204.1 195.8 202.9 197.2Z"/>
<path class="s o" d="M210.6 199.8 218.6 190.5 210.8 188 202.9 197.2Z"/>
<path class="b0 s" d="M274.4 192.8 281.8 189.5 273.5 182.7 266.1 185.9Z"/>
<path class="b2 s" d="M338.7 238 345.2 238.5 336.7 226.3 330 225.5Z"/>
<path class="b1 s" d="M314.5 214.9 321.5 214.3 312.9 204.2 306 204.7Z"/>
<path class="b0 s" d="M226.5 194.2 234.4 186.4 226.5 182.8 218.6 190.5Z"/>
<path class="b0 s" d="M258.5 190.7 266.1 185.9 257.9 180.2 250.3 184.9Z"/>
<path class="b0 s" d="M242.5 191.1 250.3 184.9 242.2 180.3 234.4 186.4Z"/>
<path class="b2" d="M164.2 246.3 171.3 232.7 164 231.9 157.6 244.2Z"/>
<path class="b3" d="M163.2 248.3 164.2 246.3 157.6 244.2 156 247.3Z"/>
<path class="s o" d="M163.2 248.3 171.3 232.7 164 231.9 156 247.3Z"/>
<path class="b1 s" d="M186.8 220.5 194.9 208 187.4 206.4 179.3 218.7Z"/>
<path class="b2" d="M347 241.3 345.2 238.5 338.7 238 342.5 243.9Z"/>
<path class="b3" d="M347.4 251.6 353.9 252 347 241.3 342.5 243.9Z"/>
<path class="s o" d="M347.4 251.6 353.9 252 345.2 238.5 338.7 238Z"/>
<path class="b1 s" d="M298.8 206.6 306 204.7 297.5 195.6 290.3 197.5Z"/>
<path class="b3 s" d="M155.2 265.5 163.2 248.3 156 247.3 148 264.4Z"/>
<path class="b1" d="M324.6 218.5 321.5 214.3 314.5 214.9 318.9 220.6Z"/>
<path class="b2" d="M323.2 226.3 330 225.5 324.6 218.5 318.9 220.6Z"/>
<path class="s o" d="M323.2 226.3 330 225.5 321.5 214.3 314.5 214.9Z"/>
<path class="b1 s" d="M202.6 210.8 210.6 199.8 202.9 197.2 194.9 208Z"/>
<path class="b0" d="M288.8 196.1 281.8 189.5 274.4 192.8 279.3 197.4Z"/>
<path class="b1" d="M282.9 200.9 290.3 197.5 288.8 196.1 279.3 197.4Z"/>
<path class="s o" d="M282.9 200.9 290.3 197.5 281.8 189.5 274.4 192.8Z"/>
<path class="b3" d="M356.1 266.3 361.9 266.5 362.3 266.2 353.9 252 347.4 251.6Z"/>
<path class="b4" d="M361.9 266.5 362.5 266.6 362.3 266.2Z"/>
<path class="s o" d="M356.1 266.3 362.5 266.6 353.9 252 347.4 251.6Z"/>
<path class="b1" d="M185.8 222.3 186.8 220.5 179.3 218.7 178.3 220.6Z"/>
<path class="b2" d="M178.8 234.6 185.8 222.3 178.3 220.6 171.3 232.7Z"/>
<path class="s o" d="M178.8 234.6 186.8 220.5 179.3 218.7 171.3 232.7Z"/>
<path class="b3" d="M152.5 271.9 155.2 265.5 148 264.4 145.8 269.5Z"/>
<path class="b4" d="M147.1 284.4 152.5 271.9 145.8 269.5 140 283Z"/>
<path class="s o" d="M147.1 284.4 155.2 265.5 148 264.4 140 283Z"/>
<path class="b0" d="M223.3 198 226.5 194.2 218.6 190.5 213 197Z"/>
<path class="b1" d="M218.6 203.6 223.3 198 213 197 210.6 199.8Z"/>
<path class="s o" d="M218.6 203.6 226.5 194.2 218.6 190.5 210.6 199.8Z"/>
<path class="b0 s" d="M266.9 197.6 274.4 192.8 266.1 185.9 258.5 190.7Z"/>
<path class="b5" d="M132.8 322.5 139.1 304.8 132.1 303.2 126.2 319.6Z"/>
<path class="b6" d="M131.2 326.8 132.8 322.5 126.2 319.6 124.2 325Z"/>
<path class="s o" d="M131.2 326.8 139.1 304.8 132.1 303.2 124.2 325Z"/>
<path class="b4" d="M142.1 297.3 147.1 284.4 140 283 135.5 294.6Z"/>
<path class="b5" d="M139.1 304.8 142.1 297.3 135.5 294.6 132.1 303.2Z"/>
<path class="s o" d="M139.1 304.8 147.1 284.4 140 283 132.1 303.2Z"/>
<path class="b0" d="M234.9 198.7 242.5 191.1 234.4 186.4 226.5 194.2 234.1 198.7Z"/>
<path class="b1" d="M234.6 199 234.9 198.7 234.1 198.7Z"/>
<path class="s o" d="M234.6 199 242.5 191.1 234.4 186.4 226.5 194.2Z"/>
<path class="b0 s" d="M250.8 197 258.5 190.7 250.3 184.9 242.5 191.1Z"/>
<path class="b1 s" d="M307.4 217 314.5 214.9 306 204.7 298.8 206.6Z"/>
<path class="b2 s" d="M331.9 238.9 338.7 238 330 225.5 323.2 226.3Z"/>
<path class="b1 s" d="M194.5 223.4 202.6 210.8 194.9 208 186.8 220.5Z"/>
<path class="b2" d="M171.7 248.3 178.8 234.6 171.3 232.7 164.2 246.3Z"/>
<path class="b3" d="M170.6 250.4 171.7 248.3 164.2 246.3 163.2 248.3Z"/>
<path class="s o" d="M170.6 250.4 178.8 234.6 171.3 232.7 163.2 248.3Z"/>
<path class="b1 s" d="M291.5 210.1 298.8 206.6 290.3 197.5 282.9 200.9Z"/>
<path class="b2" d="M342.5 243.9 338.7 238 331.9 238.9 336.7 246.4Z"/>
<path class="b3" d="M340.7 252.6 347.4 251.6 342.5 243.9 336.7 246.4Z"/>
<path class="s o" d="M340.7 252.6 347.4 251.6 338.7 238 331.9 238.9Z"/>
<path class="b1 s" d="M210.5 214.7 218.6 203.6 210.6 199.8 202.6 210.8Z"/>
<path class="b3 s" d="M162.5 267.8 170.6 250.4 163.2 248.3 155.2 265.5Z"/>
<path class="b1" d="M318.9 220.6 314.5 214.9 307.4 217 311.7 222.6Z"/>
<path class="b2" d="M316.1 228.5 323.2 226.3 318.9 220.6 311.7 222.6Z"/>
<path class="s o" d="M316.1 228.5 323.2 226.3 314.5 214.9 307.4 217Z"/>
<path class="b0" d="M279.3 197.4 274.4 192.8 266.9 197.6 267.7 198.4Z"/>
<path class="b1" d="M275.4 205.8 282.9 200.9 279.3 197.4 267.7 198.4Z"/>
<path class="s o" d="M275.4 205.8 282.9 200.9 274.4 192.8 266.9 197.6Z"/>
<path class="b0" d="M234.1 198.7 226.5 194.2 223.3 198Z"/>
<path class="b1" d="M226.7 208.5 234.6 199 234.1 198.7 223.3 198 218.6 203.6Z"/>
<path class="s o" d="M226.7 208.5 234.6 199 226.5 194.2 218.6 203.6Z"/>
<path class="b0" d="M265.8 198.5 266.9 197.6 258.5 190.7 250.8 197 253 198.9Z"/>
<path class="b1" d="M259.1 204.1 265.8 198.5 253 198.9Z"/>
<path class="s o" d="M259.1 204.1 266.9 197.6 258.5 190.7 250.8 197Z"/>
<path class="b1" d="M194.3 223.8 194.5 223.4 186.8 220.5 185.8 222.3Z"/>
<path class="b2" d="M186.4 237.6 194.3 223.8 185.8 222.3 178.8 234.6Z"/>
<path class="s o" d="M186.4 237.6 194.5 223.4 186.8 220.5 178.8 234.6Z"/>
<path class="b0" d="M248.8 199 250.8 197 242.5 191.1 234.9 198.7Z"/>
<path class="b1" d="M242.9 205 248.8 199 234.9 198.7 234.6 199Z"/>
<path class="s o" d="M242.9 205 250.8 197 242.5 191.1 234.6 199Z"/>
<path class="b3" d="M159.9 274.1 162.5 267.8 155.2 265.5 152.5 271.9Z"/>
<path class="b4" d="M154.5 286.9 159.9 274.1 152.5 271.9 147.1 284.4Z"/>
<path class="s o" d="M154.5 286.9 162.5 267.8 155.2 265.5 147.1 284.4Z"/>
<path class="b3 s" d="M349.5 267.6 356.1 266.3 347.4 251.6 340.7 252.6Z"/>
<path class="b5" d="M140 325.3 146.4 307.5 139.1 304.8 132.8 322.5Z"/>
<path class="b6" d="M138.4 329.8 140 325.3 132.8 322.5 131.2 326.8Z"/>
<path class="s o" d="M138.4 329.8 146.4 307.5 139.1 304.8 131.2 326.8Z"/>
<path class="b4" d="M149.4 299.8 154.5 286.9 147.1 284.4 142.1 297.3Z"/>
<path class="b5" d="M146.4 307.5 149.4 299.8 142.1 297.3 139.1 304.8Z"/>
<path class="s o" d="M146.4 307.5 154.5 286.9 147.1 284.4 139.1 304.8Z"/>
<path class="b1 s" d="M300.2 220.6 307.4 217 298.8 206.6 291.5 210.1Z"/>
<path class="b2 s" d="M324.9 241.2 331.9 238.9 323.2 226.3 316.1 228.5Z"/>
<path class="b1" d="M203.9 225.2 210.5 214.7 202.6 210.8 194.5 223.4 195.9 224Z"/>
<path class="b2" d="M202.4 227.4 203.9 225.2 195.9 224Z"/>
<path class="s o" d="M202.4 227.4 210.5 214.7 202.6 210.8 194.5 223.4Z"/>
<path class="b2" d="M180.1 250.1 186.4 237.6 178.8 234.6 171.7 248.3Z"/>
<path class="b3" d="M178.3 253.6 180.1 250.1 171.7 248.3 170.6 250.4Z"/>
<path class="s o" d="M178.3 253.6 186.4 237.6 178.8 234.6 170.6 250.4Z"/>
<path class="b1 s" d="M284 215.2 291.5 210.1 282.9 200.9 275.4 205.8Z"/>
<path class="b1 s" d="M218.6 219.7 226.7 208.5 218.6 203.6 210.5 214.7Z"/>
<path class="b0" d="M267.7 198.4 266.9 197.6 265.8 198.5Z"/>
<path class="b1" d="M267.7 212.4 275.4 205.8 267.7 198.4 265.8 198.5 259.1 204.1Z"/>
<path class="s o" d="M267.7 212.4 275.4 205.8 266.9 197.6 259.1 204.1Z"/>
<path class="b1 s" d="M234.9 214.7 242.9 205 234.6 199 226.7 208.5Z"/>
<path class="b2" d="M336.7 246.4 331.9 238.9 324.9 241.2 329.7 248.7Z"/>
<path class="b3" d="M333.8 255.2 340.7 252.6 336.7 246.4 329.7 248.7Z"/>
<path class="s o" d="M333.8 255.2 340.7 252.6 331.9 238.9 324.9 241.2Z"/>
<path class="b0" d="M253 198.9 250.8 197 248.8 199Z"/>
<path class="b1" d="M251.3 212.2 259.1 204.1 253 198.9 248.8 199 242.9 205Z"/>
<path class="s o" d="M251.3 212.2 259.1 204.1 250.8 197 242.9 205Z"/>
<path class="b3 s" d="M170.1 271.2 178.3 253.6 170.6 250.4 162.5 267.8Z"/>
<path class="b1" d="M311.7 222.6 307.4 217 300.2 220.6 303 224.3Z"/>
<path class="b2" d="M308.9 232.3 316.1 228.5 311.7 222.6 303 224.3Z"/>
<path class="s o" d="M308.9 232.3 316.1 228.5 307.4 217 300.2 220.6Z"/>
<path class="b1" d="M195.9 224 194.5 223.4 194.3 223.8Z"/>
<path class="b2" d="M194.3 241.8 202.4 227.4 195.9 224 194.3 223.8 186.4 237.6Z"/>
<path class="s o" d="M194.3 241.8 202.4 227.4 194.5 223.4 186.4 237.6Z"/>
<path class="b3" d="M168 276.2 170.1 271.2 162.5 267.8 159.9 274.1Z"/>
<path class="b4" d="M162 290.4 168 276.2 159.9 274.1 154.5 286.9Z"/>
<path class="s o" d="M162 290.4 170.1 271.2 162.5 267.8 154.5 286.9Z"/>
<path class="b3 s" d="M342.7 270.3 349.5 267.6 340.7 252.6 333.8 255.2Z"/>
<path class="b5" d="M148 327.9 153.9 311.3 146.4 307.5 140 325.3Z"/>
<path class="b6" d="M145.9 333.8 148 327.9 140 325.3 138.4 329.8Z"/>
<path class="s o" d="M145.9 333.8 153.9 311.3 146.4 307.5 138.4 329.8Z"/>
<path class="b4" d="M157.5 302.2 162 290.4 154.5 286.9 149.4 299.8Z"/>
<path class="b5" d="M153.9 311.3 157.5 302.2 149.4 299.8 146.4 307.5Z"/>
<path class="s o" d="M153.9 311.3 162 290.4 154.5 286.9 146.4 307.5Z"/>
<path class="b1" d="M292.7 225.8 300.2 220.6 291.5 210.1 284 215.2 292.7 225.8Z"/>
<path class="b2" d="M292.7 225.8 292.7 225.8 292.7 225.8Z"/>
<path class="s o" d="M292.7 225.8 300.2 220.6 291.5 210.1 284 215.2Z"/>
<path class="b1" d="M214.5 226.3 218.6 219.7 210.5 214.7 203.9 225.2Z"/>
<path class="b2" d="M210.5 232.6 214.5 226.3 203.9 225.2 202.4 227.4Z"/>
<path class="s o" d="M210.5 232.6 218.6 219.7 210.5 214.7 202.4 227.4Z"/>
<path class="b2 s" d="M317.8 245.2 324.9 241.2 316.1 228.5 308.9 232.3Z"/>
<path class="b2" d="M189.2 251.8 194.3 241.8 186.4 237.6 180.1 250.1Z"/>
<path class="b3" d="M186.1 258 189.2 251.8 180.1 250.1 178.3 253.6Z"/>
<path class="s o" d="M186.1 258 194.3 241.8 186.4 237.6 178.3 253.6Z"/>
<path class="b1 s" d="M276.3 221.9 284 215.2 275.4 205.8 267.7 212.4Z"/>
<path class="b1 s" d="M226.9 226 234.9 214.7 226.7 208.5 218.6 219.7Z"/>
<path class="b1 s" d="M259.9 220.7 267.7 212.4 259.1 204.1 251.3 212.2Z"/>
<path class="b1 s" d="M243.4 222 251.3 212.2 242.9 205 234.9 214.7Z"/>
<path class="b3 s" d="M177.9 275.7 186.1 258 178.3 253.6 170.1 271.2Z"/>
<path class="b1" d="M303 224.3 300.2 220.6 292.7 225.8Z"/>
<path class="b2" d="M301.5 237.7 308.9 232.3 303 224.3 292.7 225.8 292.7 225.8Z"/>
<path class="s o" d="M301.5 237.7 308.9 232.3 300.2 220.6 292.7 225.8Z"/>
<path class="b2" d="M329.7 248.7 324.9 241.2 317.8 245.2 321.3 250.8Z"/>
<path class="b3" d="M326.7 259.3 333.8 255.2 329.7 248.7 321.3 250.8Z"/>
<path class="s o" d="M326.7 259.3 333.8 255.2 324.9 241.2 317.8 245.2Z"/>
<path class="b2 s" d="M202.4 247.2 210.5 232.6 202.4 227.4 194.3 241.8Z"/>
<path class="b3" d="M176.9 278.2 177.9 275.7 170.1 271.2 168 276.2Z"/>
<path class="b4" d="M169.8 295.2 176.9 278.2 168 276.2 162 290.4Z"/>
<path class="s o" d="M169.8 295.2 177.9 275.7 170.1 271.2 162 290.4Z"/>
<path class="b1" d="M292.7 225.8 284 215.2 276.3 221.9 280.4 227Z"/>
<path class="b2" d="M285.1 232.7 292.7 225.8 292.7 225.8 280.4 227Z"/>
<path class="s o" d="M285.1 232.7 292.7 225.8 284 215.2 276.3 221.9Z"/>
<path class="b5" d="M156.6 330.4 161.6 316.3 153.9 311.3 148 327.9Z"/>
<path class="b6" d="M153.5 339 156.6 330.4 148 327.9 145.9 333.8Z"/>
<path class="s o" d="M153.5 339 161.6 316.3 153.9 311.3 145.9 333.8Z"/>
<path class="b1" d="M226.1 227.2 226.9 226 218.6 219.7 214.5 226.3Z"/>
<path class="b2" d="M218.8 239.1 226.1 227.2 214.5 226.3 210.5 232.6Z"/>
<path class="s o" d="M218.8 239.1 226.9 226 218.6 219.7 210.5 232.6Z"/>
<path class="b4" d="M166.2 304.4 169.8 295.2 162 290.4 157.5 302.2Z"/>
<path class="b5" d="M161.6 316.3 166.2 304.4 157.5 302.2 153.9 311.3Z"/>
<path class="s o" d="M161.6 316.3 169.8 295.2 162 290.4 153.9 311.3Z"/>
<path class="b3 s" d="M335.7 274.7 342.7 270.3 333.8 255.2 326.7 259.3Z"/>
<path class="b1" d="M271.1 227.5 276.3 221.9 267.7 212.4 259.9 220.7 266.2 227.8Z"/>
<path class="b2" d="M268.5 230.3 271.1 227.5 266.2 227.8Z"/>
<path class="s o" d="M268.5 230.3 276.3 221.9 267.7 212.4 259.9 220.7Z"/>
<path class="b2" d="M199.3 253.3 202.4 247.2 194.3 241.8 189.2 251.8Z"/>
<path class="b3" d="M194.2 263.5 199.3 253.3 189.2 251.8 186.1 258Z"/>
<path class="s o" d="M194.2 263.5 202.4 247.2 194.3 241.8 186.1 258Z"/>
<path class="b1" d="M239.3 227.8 243.4 222 234.9 214.7 226.9 226 228.4 227.4Z"/>
<path class="b2" d="M235.3 233.5 239.3 227.8 228.4 227.4Z"/>
<path class="s o" d="M235.3 233.5 243.4 222 234.9 214.7 226.9 226Z"/>
<path class="b2 s" d="M310.4 250.8 317.8 245.2 308.9 232.3 301.5 237.7Z"/>
<path class="b1" d="M254 228 259.9 220.7 251.3 212.2 243.4 222 249.3 228Z"/>
<path class="b2" d="M251.9 230.6 254 228 249.3 228Z"/>
<path class="s o" d="M251.9 230.6 259.9 220.7 251.3 212.2 243.4 222Z"/>
<path class="b3" d="M186.6 280 194.2 263.5 186.1 258 177.9 275.7 183 279.4Z"/>
<path class="b4" d="M185.9 281.5 186.6 280 183 279.4Z"/>
<path class="s o" d="M185.9 281.5 194.2 263.5 186.1 258 177.9 275.7Z"/>
<path class="b2 s" d="M210.6 253.8 218.8 239.1 210.5 232.6 202.4 247.2Z"/>
<path class="b2 s" d="M294 244.7 301.5 237.7 292.7 225.8 285.1 232.7Z"/>
<path class="b2" d="M321.3 250.8 317.8 245.2 310.4 250.8 311.6 252.6Z"/>
<path class="b3" d="M319.4 265 326.7 259.3 321.3 250.8 311.6 252.6Z"/>
<path class="s o" d="M319.4 265 326.7 259.3 317.8 245.2 310.4 250.8Z"/>
<path class="b3" d="M183 279.4 177.9 275.7 176.9 278.2Z"/>
<path class="b4" d="M177.7 301.1 185.9 281.5 183 279.4 176.9 278.2 169.8 295.2Z"/>
<path class="s o" d="M177.7 301.1 185.9 281.5 177.9 275.7 169.8 295.2Z"/>
<path class="b1" d="M280.4 227 276.3 221.9 271.1 227.5Z"/>
<path class="b2" d="M277.3 241.2 285.1 232.7 280.4 227 271.1 227.5 268.5 230.3Z"/>
<path class="s o" d="M277.3 241.2 285.1 232.7 276.3 221.9 268.5 230.3Z"/>
<path class="b1" d="M228.4 227.4 226.9 226 226.1 227.2Z"/>
<path class="b2" d="M227.2 246.7 235.3 233.5 228.4 227.4 226.1 227.2 218.8 239.1Z"/>
<path class="s o" d="M227.2 246.7 235.3 233.5 226.9 226 218.8 239.1Z"/>
<path class="b5" d="M165.8 332.8 169.5 322.4 161.6 316.3 156.6 330.4Z"/>
<path class="b6" d="M161.4 345.3 165.8 332.8 156.6 330.4 153.5 339Z"/>
<path class="s o" d="M161.4 345.3 169.5 322.4 161.6 316.3 153.5 339Z"/>
<path class="b4" d="M175.6 306.5 177.7 301.1 169.8 295.2 166.2 304.4Z"/>
<path class="b5" d="M169.5 322.4 175.6 306.5 166.2 304.4 161.6 316.3Z"/>
<path class="s o" d="M169.5 322.4 177.7 301.1 169.8 295.2 161.6 316.3Z"/>
<path class="b1" d="M266.2 227.8 259.9 220.7 254 228Z"/>
<path class="b2" d="M260.6 240.4 268.5 230.3 266.2 227.8 254 228 251.9 230.6Z"/>
<path class="s o" d="M260.6 240.4 268.5 230.3 259.9 220.7 251.9 230.6Z"/>
<path class="b1" d="M249.3 228 243.4 222 239.3 227.8Z"/>
<path class="b2" d="M243.9 242.2 251.9 230.6 249.3 228 239.3 227.8 235.3 233.5Z"/>
<path class="s o" d="M243.9 242.2 251.9 230.6 243.4 222 235.3 233.5Z"/>
<path class="b3" d="M331.1 278.4 335.7 274.7 326.7 259.3 319.4 265 327.7 279.2Z"/>
<path class="b4" d="M328.4 280.6 331.1 278.4 327.7 279.2Z"/>
<path class="s o" d="M328.4 280.6 335.7 274.7 326.7 259.3 319.4 265Z"/>
<path class="b2" d="M210.2 254.6 210.6 253.8 202.4 247.2 199.3 253.3Z"/>
<path class="b3" d="M202.4 270.3 210.2 254.6 199.3 253.3 194.2 263.5Z"/>
<path class="s o" d="M202.4 270.3 210.6 253.8 202.4 247.2 194.2 263.5Z"/>
<path class="b2" d="M307.9 253.2 310.4 250.8 301.5 237.7 294 244.7 300.4 254.2Z"/>
<path class="b3" d="M302.9 257.9 307.9 253.2 300.4 254.2Z"/>
<path class="s o" d="M302.9 257.9 310.4 250.8 301.5 237.7 294 244.7Z"/>
<path class="b2" d="M222.3 255.6 227.2 246.7 218.8 239.1 210.6 253.8 211.6 254.7Z"/>
<path class="b3" d="M219 261.6 222.3 255.6 211.6 254.7Z"/>
<path class="s o" d="M219 261.6 227.2 246.7 218.8 239.1 210.6 253.8Z"/>
<path class="b3" d="M197.2 281.6 202.4 270.3 194.2 263.5 186.6 280Z"/>
<path class="b4" d="M194.1 288.4 197.2 281.6 186.6 280 185.9 281.5Z"/>
<path class="s o" d="M194.1 288.4 202.4 270.3 194.2 263.5 185.9 281.5Z"/>
<path class="b2 s" d="M286.3 253.4 294 244.7 285.1 232.7 277.3 241.2Z"/>
<path class="b2" d="M311.6 252.6 310.4 250.8 307.9 253.2Z"/>
<path class="b3" d="M312 272.4 319.4 265 311.6 252.6 307.9 253.2 302.9 257.9Z"/>
<path class="s o" d="M312 272.4 319.4 265 310.4 250.8 302.9 257.9Z"/>
<path class="b2 s" d="M235.8 255.6 243.9 242.2 235.3 233.5 227.2 246.7Z"/>
<path class="b2 s" d="M269.5 251.5 277.3 241.2 268.5 230.3 260.6 240.4Z"/>
<path class="b4 s" d="M185.9 308.3 194.1 288.4 185.9 281.5 177.7 301.1Z"/>
<path class="b2 s" d="M252.6 252.2 260.6 240.4 251.9 230.6 243.9 242.2Z"/>
<path class="b5" d="M175.8 335 177.6 329.7 169.5 322.4 165.8 332.8Z"/>
<path class="b6" d="M169.4 352.9 175.8 335 165.8 332.8 161.4 345.3Z"/>
<path class="s o" d="M169.4 352.9 177.6 329.7 169.5 322.4 161.4 345.3Z"/>
<path class="b4" d="M185.8 308.4 185.9 308.3 177.7 301.1 175.6 306.5Z"/>
<path class="b5" d="M177.6 329.7 185.8 308.4 175.6 306.5 169.5 322.4Z"/>
<path class="s o" d="M177.6 329.7 185.9 308.3 177.7 301.1 169.5 322.4Z"/>
<path class="b2" d="M211.6 254.7 210.6 253.8 210.2 254.6Z"/>
<path class="b3" d="M210.8 278.2 219 261.6 211.6 254.7 210.2 254.6 202.4 270.3Z"/>
<path class="s o" d="M210.8 278.2 219 261.6 210.6 253.8 202.4 270.3Z"/>
<path class="b3" d="M327.7 279.2 319.4 265 312 272.4 317 281.2Z"/>
<path class="b4" d="M321.1 288.1 328.4 280.6 327.7 279.2 317 281.2Z"/>
<path class="s o" d="M321.1 288.1 328.4 280.6 319.4 265 312 272.4Z"/>
<path class="b2" d="M300.4 254.2 294 244.7 286.3 253.4 287.7 255.5Z"/>
<path class="b3" d="M295.3 266.8 302.9 257.9 300.4 254.2 287.7 255.5Z"/>
<path class="s o" d="M295.3 266.8 302.9 257.9 294 244.7 286.3 253.4Z"/>
<path class="b2" d="M235.3 256.4 235.8 255.6 227.2 246.7 222.3 255.6Z"/>
<path class="b3" d="M227.6 270.7 235.3 256.4 222.3 255.6 219 261.6Z"/>
<path class="s o" d="M227.6 270.7 235.8 255.6 227.2 246.7 219 261.6Z"/>
<path class="b2" d="M284.5 255.8 286.3 253.4 277.3 241.2 269.5 251.5 273 256.4Z"/>
<path class="b3" d="M278.4 263.8 284.5 255.8 273 256.4Z"/>
<path class="s o" d="M278.4 263.8 286.3 253.4 277.3 241.2 269.5 251.5Z"/>
<path class="b3" d="M208.6 283 210.8 278.2 202.4 270.3 197.2 281.6Z"/>
<path class="b4" d="M202.5 296.6 208.6 283 197.2 281.6 194.1 288.4Z"/>
<path class="s o" d="M202.5 296.6 210.8 278.2 202.4 270.3 194.1 288.4Z"/>
<path class="b2" d="M249.9 256.8 252.6 252.2 243.9 242.2 235.8 255.6 236.5 256.5Z"/>
<path class="b3" d="M244.5 265.7 249.9 256.8 236.5 256.5Z"/>
<path class="s o" d="M244.5 265.7 252.6 252.2 243.9 242.2 235.8 255.6Z"/>
<path class="b2" d="M266 256.6 269.5 251.5 260.6 240.4 252.6 252.2 256.2 256.8Z"/>
<path class="b3" d="M261.5 263.4 266 256.6 256.2 256.8Z"/>
<path class="s o" d="M261.5 263.4 269.5 251.5 260.6 240.4 252.6 252.2Z"/>
<path class="b3 s" d="M304.3 281.5 312 272.4 302.9 257.9 295.3 266.8Z"/>
<path class="b4" d="M196.9 310.1 202.5 296.6 194.1 288.4 185.9 308.3 186.1 308.5Z"/>
<path class="b5" d="M194.2 316.6 196.9 310.1 186.1 308.5Z"/>
<path class="s o" d="M194.2 316.6 202.5 296.6 194.1 288.4 185.9 308.3Z"/>
<path class="b5" d="M184.4 336.7 177.6 329.7 175.8 335Z"/>
<path class="b6" d="M177.7 361.6 185.9 338.3 184.4 336.7 175.8 335 169.4 352.9Z"/>
<path class="s o" d="M177.7 361.6 185.9 338.3 177.6 329.7 169.4 352.9Z"/>
<path class="b4" d="M186.1 308.5 185.9 308.3 185.8 308.4Z"/>
<path class="b5" d="M186.4 337 194.2 316.6 186.1 308.5 185.8 308.4 177.6 329.7 184.4 336.7Z"/>
<path class="b6" d="M185.9 338.3 186.4 337 184.4 336.7Z"/>
<path class="s o" d="M185.9 338.3 194.2 316.6 185.9 308.3 177.6 329.7Z"/>
<path class="b3" d="M220.9 284.2 227.6 270.7 219 261.6 210.8 278.2 215.9 283.7Z"/>
<path class="b4" d="M219.3 287.5 220.9 284.2 215.9 283.7Z"/>
<path class="s o" d="M219.3 287.5 227.6 270.7 219 261.6 210.8 278.2Z"/>
<path class="b2" d="M287.7 255.5 286.3 253.4 284.5 255.8Z"/>
<path class="b3" d="M287.4 277.4 295.3 266.8 287.7 255.5 284.5 255.8 278.4 263.8Z"/>
<path class="s o" d="M287.4 277.4 295.3 266.8 286.3 253.4 278.4 263.8Z"/>
<path class="b3" d="M317 281.2 312 272.4 304.3 281.5 305.2 282.9Z"/>
<path class="b4" d="M313.5 297.3 321.1 288.1 317 281.2 305.2 282.9Z"/>
<path class="s o" d="M313.5 297.3 321.1 288.1 312 272.4 304.3 281.5Z"/>
<path class="b2" d="M236.5 256.5 235.8 255.6 235.3 256.4Z"/>
<path class="b3" d="M236.3 281 244.5 265.7 236.5 256.5 235.3 256.4 227.6 270.7Z"/>
<path class="s o" d="M236.3 281 244.5 265.7 235.8 255.6 227.6 270.7Z"/>
<path class="b2" d="M273 256.4 269.5 251.5 266 256.6Z"/>
<path class="b3" d="M270.4 275.9 278.4 263.8 273 256.4 266 256.6 261.5 263.4Z"/>
<path class="s o" d="M270.4 275.9 278.4 263.8 269.5 251.5 261.5 263.4Z"/>
<path class="b2" d="M256.2 256.8 252.6 252.2 249.9 256.8Z"/>
<path class="b3" d="M253.4 277.1 261.5 263.4 256.2 256.8 249.9 256.8 244.5 265.7Z"/>
<path class="s o" d="M253.4 277.1 261.5 263.4 252.6 252.2 244.5 265.7Z"/>
<path class="b3" d="M215.9 283.7 210.8 278.2 208.6 283Z"/>
<path class="b4" d="M211 306 219.3 287.5 215.9 283.7 208.6 283 202.5 296.6Z"/>
<path class="s o" d="M211 306 219.3 287.5 210.8 278.2 202.5 296.6Z"/>
<path class="b6" d="M188.2 365.8 194.4 348.1 185.9 338.3 177.7 361.6 180 364.3Z"/>
<path class="b7" d="M186.1 371.6 188.2 365.8 180 364.3Z"/>
<path class="s o" d="M186.1 371.6 194.4 348.1 185.9 338.3 177.7 361.6Z"/>
<path class="b3" d="M303.1 283.1 304.3 281.5 295.3 266.8 287.4 277.4 291.7 284.2Z"/>
<path class="b4" d="M296.6 292.2 303.1 283.1 291.7 284.2Z"/>
<path class="s o" d="M296.6 292.2 304.3 281.5 295.3 266.8 287.4 277.4Z"/>
<path class="b4" d="M208.7 311.6 211 306 202.5 296.6 196.9 310.1Z"/>
<path class="b5" d="M202.7 326.2 208.7 311.6 196.9 310.1 194.2 316.6Z"/>
<path class="s o" d="M202.7 326.2 211 306 202.5 296.6 194.2 316.6Z"/>
<path class="b5" d="M197.9 338.8 202.7 326.2 194.2 316.6 186.4 337Z"/>
<path class="b6" d="M194.4 348.1 197.9 338.8 186.4 337 185.9 338.3Z"/>
<path class="s o" d="M194.4 348.1 202.7 326.2 194.2 316.6 185.9 338.3Z"/>
<path class="b3" d="M234.3 285 236.3 281 227.6 270.7 220.9 284.2Z"/>
<path class="b4" d="M228 297.9 234.3 285 220.9 284.2 219.3 287.5Z"/>
<path class="s o" d="M228 297.9 236.3 281 227.6 270.7 219.3 287.5Z"/>
<path class="b3" d="M282.6 284.8 287.4 277.4 278.4 263.8 270.4 275.9 276.5 285.2Z"/>
<path class="b4" d="M279.5 289.6 282.6 284.8 276.5 285.2Z"/>
<path class="s o" d="M279.5 289.6 287.4 277.4 278.4 263.8 270.4 275.9Z"/>
<path class="b3" d="M248.9 285.5 253.4 277.1 244.5 265.7 236.3 281 239.6 285.3Z"/>
<path class="b4" d="M245.2 292.5 248.9 285.5 239.6 285.3Z"/>
<path class="s o" d="M245.2 292.5 253.4 277.1 244.5 265.7 236.3 281Z"/>
<path class="b3" d="M305.2 282.9 304.3 281.5 303.1 283.1Z"/>
<path class="b4" d="M305.8 308.3 313.5 297.3 305.2 282.9 303.1 283.1 296.6 292.2Z"/>
<path class="s o" d="M305.8 308.3 313.5 297.3 304.3 281.5 296.6 292.2Z"/>
<path class="b3" d="M264.8 285.5 270.4 275.9 261.5 263.4 253.4 277.1 259.4 285.6Z"/>
<path class="b4" d="M262.3 289.8 264.8 285.5 259.4 285.6Z"/>
<path class="s o" d="M262.3 289.8 270.4 275.9 261.5 263.4 253.4 277.1Z"/>
<path class="b4" d="M221.4 312.8 228 297.9 219.3 287.5 211 306 216.3 312.4Z"/>
<path class="b5" d="M219.7 316.6 221.4 312.8 216.3 312.4Z"/>
<path class="s o" d="M219.7 316.6 228 297.9 219.3 287.5 211 306Z"/>
<path class="b6" d="M200.1 367.6 203.1 359.1 194.4 348.1 188.2 365.8Z"/>
<path class="b7" d="M194.8 382.8 200.1 367.6 188.2 365.8 186.1 371.6Z"/>
<path class="s o" d="M194.8 382.8 203.1 359.1 194.4 348.1 186.1 371.6Z"/>
<path class="b4" d="M216.3 312.4 211 306 208.7 311.6Z"/>
<path class="b5" d="M211.4 337 219.7 316.6 216.3 312.4 208.7 311.6 202.7 326.2Z"/>
<path class="s o" d="M211.4 337 219.7 316.6 211 306 202.7 326.2Z"/>
<path class="b3" d="M291.7 284.2 287.4 277.4 282.6 284.8Z"/>
<path class="b4" d="M288.7 304.6 296.6 292.2 291.7 284.2 282.6 284.8 279.5 289.6Z"/>
<path class="s o" d="M288.7 304.6 296.6 292.2 287.4 277.4 279.5 289.6Z"/>
<path class="b5" d="M210.1 340.4 211.4 337 202.7 326.2 197.9 338.8Z"/>
<path class="b6" d="M203.1 359.1 210.1 340.4 197.9 338.8 194.4 348.1Z"/>
<path class="s o" d="M203.1 359.1 211.4 337 202.7 326.2 194.4 348.1Z"/>
<path class="b3" d="M239.6 285.3 236.3 281 234.3 285Z"/>
<path class="b4" d="M236.9 309.7 245.2 292.5 239.6 285.3 234.3 285 228 297.9Z"/>
<path class="s o" d="M236.9 309.7 245.2 292.5 236.3 281 228 297.9Z"/>
<path class="b3" d="M276.5 285.2 270.4 275.9 264.8 285.5Z"/>
<path class="b4" d="M271.4 303.7 279.5 289.6 276.5 285.2 264.8 285.5 262.3 289.8Z"/>
<path class="s o" d="M271.4 303.7 279.5 289.6 270.4 275.9 262.3 289.8Z"/>
<path class="b3" d="M259.4 285.6 253.4 277.1 248.9 285.5Z"/>
<path class="b4" d="M254.2 305.3 262.3 289.8 259.4 285.6 248.9 285.5 245.2 292.5Z"/>
<path class="s o" d="M254.2 305.3 262.3 289.8 253.4 277.1 245.2 292.5Z"/>
<path class="b4" d="M303.3 312.2 305.8 308.3 296.6 292.2 288.7 304.6 293.4 313.1Z"/>
<path class="b5" d="M297.9 320.9 303.3 312.2 293.4 313.1Z"/>
<path class="s o" d="M297.9 320.9 305.8 308.3 296.6 292.2 288.7 304.6Z"/>
<path class="b4" d="M235.1 313.8 236.9 309.7 228 297.9 221.4 312.8Z"/>
<path class="b5" d="M228.6 328.5 235.1 313.8 221.4 312.8 219.7 316.6Z"/>
<path class="s o" d="M228.6 328.5 236.9 309.7 228 297.9 219.7 316.6Z"/>
<path class="b6" d="M210.2 369 203.1 359.1 200.1 367.6Z"/>
<path class="b7" d="M203.5 395.2 211.9 371.4 210.2 369 200.1 367.6 194.8 382.8Z"/>
<path class="s o" d="M203.5 395.2 211.9 371.4 203.1 359.1 194.8 382.8Z"/>
<path class="b5" d="M223.3 341.6 228.6 328.5 219.7 316.6 211.4 337 214.2 340.8Z"/>
<path class="b6" d="M220.3 349.1 223.3 341.6 214.2 340.8Z"/>
<path class="s o" d="M220.3 349.1 228.6 328.5 219.7 316.6 211.4 337Z"/>
<path class="b5" d="M214.2 340.8 211.4 337 210.1 340.4Z"/>
<path class="b6" d="M212.7 369.3 220.3 349.1 214.2 340.8 210.1 340.4 203.1 359.1 210.2 369Z"/>
<path class="b7" d="M211.9 371.4 212.7 369.3 210.2 369Z"/>
<path class="s o" d="M211.9 371.4 220.3 349.1 211.4 337 203.1 359.1Z"/>
<path class="b4" d="M283.5 313.7 288.7 304.6 279.5 289.6 271.4 303.7 277.7 314Z"/>
<path class="b5" d="M280.6 318.8 283.5 313.7 277.7 314Z"/>
<path class="s o" d="M280.6 318.8 288.7 304.6 279.5 289.6 271.4 303.7Z"/>
<path class="b4" d="M249.9 314.3 254.2 305.3 245.2 292.5 236.9 309.7 239.9 314Z"/>
<path class="b5" d="M245.9 322.6 249.9 314.3 239.9 314Z"/>
<path class="s o" d="M245.9 322.6 254.2 305.3 245.2 292.5 236.9 309.7Z"/>
<path class="b4" d="M265.9 314.3 271.4 303.7 262.3 289.8 254.2 305.3 260 314.4Z"/>
<path class="b5" d="M263.3 319.4 265.9 314.3 260 314.4Z"/>
<path class="s o" d="M263.3 319.4 271.4 303.7 262.3 289.8 254.2 305.3Z"/>
<path class="b7" d="M216.2 398.2 220.9 384.9 211.9 371.4 203.5 395.2 204.6 396.8Z"/>
<path class="b8" d="M212.5 408.9 216.2 398.2 204.6 396.8Z"/>
<path class="s o" d="M212.5 408.9 220.9 384.9 211.9 371.4 203.5 395.2Z"/>
<path class="b4" d="M293.4 313.1 288.7 304.6 283.5 313.7Z"/>
<path class="b5" d="M289.9 335.3 297.9 320.9 293.4 313.1 283.5 313.7 280.6 318.8Z"/>
<path class="s o" d="M289.9 335.3 297.9 320.9 288.7 304.6 280.6 318.8Z"/>
<path class="b4" d="M239.9 314 236.9 309.7 235.1 313.8Z"/>
<path class="b5" d="M237.6 341.7 245.9 322.6 239.9 314 235.1 313.8 228.6 328.5Z"/>
<path class="s o" d="M237.6 341.7 245.9 322.6 236.9 309.7 228.6 328.5Z"/>
<path class="b6" d="M226.2 370.5 229.2 362.4 220.3 349.1 212.7 369.3Z"/>
<path class="b7" d="M220.9 384.9 226.2 370.5 212.7 369.3 211.9 371.4Z"/>
<path class="s o" d="M220.9 384.9 229.2 362.4 220.3 349.1 211.9 371.4Z"/>
<path class="b5" d="M237.2 342.6 237.6 341.7 228.6 328.5 223.3 341.6Z"/>
<path class="b6" d="M229.2 362.4 237.2 342.6 223.3 341.6 220.3 349.1Z"/>
<path class="s o" d="M229.2 362.4 237.6 341.7 228.6 328.5 220.3 349.1Z"/>
<path class="b4" d="M277.7 314 271.4 303.7 265.9 314.3Z"/>
<path class="b5" d="M272.5 334.8 280.6 318.8 277.7 314 265.9 314.3 263.3 319.4Z"/>
<path class="s o" d="M272.5 334.8 280.6 318.8 271.4 303.7 263.3 319.4Z"/>
<path class="b4" d="M260 314.4 254.2 305.3 249.9 314.3Z"/>
<path class="b5" d="M255 336.9 263.3 319.4 260 314.4 249.9 314.3 245.9 322.6Z"/>
<path class="s o" d="M255 336.9 263.3 319.4 254.2 305.3 245.9 322.6Z"/>
<path class="b7" d="M229.9 399.5 220.9 384.9 216.2 398.2Z"/>
<path class="b8" d="M221.6 423.9 230 399.6 229.9 399.5 216.2 398.2 212.5 408.9Z"/>
<path class="s o" d="M221.6 423.9 230 399.6 220.9 384.9 212.5 408.9Z"/>
<path class="b5" d="M252.3 343.1 255 336.9 245.9 322.6 237.6 341.7 238.2 342.7Z"/>
<path class="b6" d="M246.7 356.1 252.3 343.1 238.2 342.7Z"/>
<path class="s o" d="M246.7 356.1 255 336.9 245.9 322.6 237.6 341.7Z"/>
<path class="b5" d="M286.2 342.5 289.9 335.3 280.6 318.8 272.5 334.8 277.1 342.9Z"/>
<path class="b6" d="M281.8 351.3 286.2 342.5 277.1 342.9Z"/>
<path class="s o" d="M281.8 351.3 289.9 335.3 280.6 318.8 272.5 334.8Z"/>
<path class="b8" d="M234.8 428.4 239.2 415.6 230 399.6 221.6 423.9 223.7 427.5Z"/>
<path class="b9" d="M230.8 440 234.8 428.4 223.7 427.5Z"/>
<path class="s o" d="M230.8 440 239.2 415.6 230 399.6 221.6 423.9Z"/>
<path class="b6" d="M234.7 371.2 229.2 362.4 226.2 370.5Z"/>
<path class="b7" d="M230 399.5 238.4 377 234.7 371.2 226.2 370.5 220.9 384.9 229.9 399.5Z"/>
<path class="b8" d="M230 399.6 230 399.5 229.9 399.5Z"/>
<path class="s o" d="M230 399.6 238.4 377 229.2 362.4 220.9 384.9Z"/>
<path class="b5" d="M268.6 343.1 272.5 334.8 263.3 319.4 255 336.9 258.8 343.2Z"/>
<path class="b6" d="M264.3 352.4 268.6 343.1 258.8 343.2Z"/>
<path class="s o" d="M264.3 352.4 272.5 334.8 263.3 319.4 255 336.9Z"/>
<path class="b5" d="M238.2 342.7 237.6 341.7 237.2 342.6Z"/>
<path class="b6" d="M240.6 371.5 246.7 356.1 238.2 342.7 237.2 342.6 229.2 362.4 234.7 371.2Z"/>
<path class="b7" d="M238.4 377 240.6 371.5 234.7 371.2Z"/>
<path class="s o" d="M238.4 377 246.7 356.1 237.6 341.7 229.2 362.4Z"/>
<path class="b8" d="M246.5 429.2 239.2 415.6 234.8 428.4Z"/>
<path class="b9" d="M240.1 457.4 248.5 432.9 246.5 429.2 234.8 428.4 230.8 440Z"/>
<path class="s o" d="M240.1 457.4 248.5 432.9 239.2 415.6 230.8 440Z"/>
<path class="b7" d="M244.8 400.4 247.6 392.9 238.4 377 230 399.5Z"/>
<path class="b8" d="M239.2 415.6 244.8 400.4 230 399.5 230 399.6Z"/>
<path class="s o" d="M239.2 415.6 247.6 392.9 238.4 377 230 399.6Z"/>
<path class="b5" d="M258.8 343.2 255 336.9 252.3 343.1Z"/>
<path class="b6" d="M255.9 371.8 264.3 352.4 258.8 343.2 252.3 343.1 246.7 356.1Z"/>
<path class="s o" d="M255.9 371.8 264.3 352.4 255 336.9 246.7 356.1Z"/>
<path class="b5" d="M277.1 342.9 272.5 334.8 268.6 343.1Z"/>
<path class="b6" d="M273.6 369.2 281.8 351.3 277.1 342.9 268.6 343.1 264.3 352.4Z"/>
<path class="s o" d="M273.6 369.2 281.8 351.3 272.5 334.8 264.3 352.4Z"/>
<path class="b6" d="M255.9 372 255.9 371.8 246.7 356.1 240.6 371.5Z"/>
<path class="b7" d="M247.6 392.9 255.9 372 240.6 371.5 238.4 377Z"/>
<path class="s o" d="M247.6 392.9 255.9 371.8 246.7 356.1 238.4 377Z"/>
<path class="b7" d="M251.8 400.6 247.6 392.9 244.8 400.4Z"/>
<path class="b8" d="M249.8 429.3 256.9 410 251.8 400.6 244.8 400.4 239.2 415.6 246.5 429.2Z"/>
<path class="b9" d="M248.5 432.9 249.8 429.3 246.5 429.2Z"/>
<path class="s o" d="M248.5 432.9 256.9 410 247.6 392.9 239.2 415.6Z"/>
<path class="b6" d="M272.4 372 273.6 369.2 264.3 352.4 255.9 371.8 256.1 372Z"/>
<path class="b7" d="M265.3 388.7 272.4 372 256.1 372Z"/>
<path class="s o" d="M265.3 388.7 273.6 369.2 264.3 352.4 255.9 371.8Z"/>
<path class="b6" d="M256.1 372 255.9 371.8 255.9 372Z"/>
<path class="b7" d="M260.5 400.8 265.3 388.7 256.1 372 255.9 372 247.6 392.9 251.8 400.6Z"/>
<path class="b8" d="M256.9 410 260.5 400.8 251.8 400.6Z"/>
<path class="s o" d="M256.9 410 265.3 388.7 255.9 371.8 247.6 392.9Z"/>
<g font-size="10.3" fill="#222">
<text transform="translate(62.8 183.7) rotate(-9) skewX(-10) scale(.62 1)" text-anchor="end">80.1822</text>
<text transform="translate(65.2 206.2) rotate(-9) skewX(-10) scale(.62 1)" text-anchor="end">79.7692</text>
<text transform="translate(67.5 228.2) rotate(-9) skewX(-10) scale(.62 1)" text-anchor="end">79.3563</text>
<text transform="translate(69.8 249.7) rotate(-9) skewX(-10) scale(.62 1)" text-anchor="end">78.9433</text>
<text transform="translate(72 270.8) rotate(-9) skewX(-10) scale(.62 1)" text-anchor="end">78.5303</text>
<text transform="translate(74.2 291.5) rotate(-9) skewX(-10) scale(.62 1)" text-anchor="end">78.1173</text>
<text transform="translate(76.4 311.7) rotate(-9) skewX(-10) scale(.62 1)" text-anchor="end">77.7043</text>
<text transform="translate(78.5 331.5) rotate(-9) skewX(-10) scale(.62 1)" text-anchor="end">77.2913</text>
<text transform="translate(80.5 350.9) rotate(-9) skewX(-10) scale(.62 1)" text-anchor="end">76.8783</text>
<text transform="translate(82.6 369.9) rotate(-9) skewX(-10) scale(.62 1)" text-anchor="end">76.4653</text>
<text transform="translate(84.6 388.6) rotate(-9) skewX(-10) scale(.62 1)" text-anchor="end">76.0524</text>
<text transform="translate(400.1 181.7) rotate(11) skewX(-10) scale(.58 1)">80.1822</text>
<text transform="translate(399 203) rotate(11) skewX(-10) scale(.58 1)">79.7692</text>
<text transform="translate(397.9 223.9) rotate(11) skewX(-10) scale(.58 1)">79.3563</text>
<text transform="translate(396.9 244.4) rotate(11) skewX(-10) scale(.58 1)">78.9433</text>
<text transform="translate(395.8 264.4) rotate(11) skewX(-10) scale(.58 1)">78.5303</text>
<text transform="translate(394.8 284) rotate(11) skewX(-10) scale(.58 1)">78.1173</text>
<text transform="translate(393.9 303.3) rotate(11) skewX(-10) scale(.58 1)">77.7043</text>
<text transform="translate(392.9 322.1) rotate(11) skewX(-10) scale(.58 1)">77.2913</text>
<text transform="translate(391.9 340.6) rotate(11) skewX(-10) scale(.58 1)">76.8783</text>
<text transform="translate(391 358.7) rotate(11) skewX(-10) scale(.58 1)">76.4653</text>
<text transform="translate(390.1 376.5) rotate(11) skewX(-10) scale(.58 1)">76.0524</text>
</g>
<text transform="translate(33 284) rotate(84) scale(.85 1)" font-size="13" fill="#222">Yield</text>
<text transform="translate(432 297.5) rotate(-84) scale(.85 1)" font-size="13" fill="#222">Yield</text>
<g font-size="6.6" fill="#222">
<text transform="translate(86.7 400.5) rotate(-23) scale(1 1)" text-anchor="end">180.0000</text>
<text transform="translate(99 406.8) rotate(-23) scale(1 1)" text-anchor="end">179.0000</text>
<text transform="translate(111.7 413.4) rotate(-23) scale(1 1)" text-anchor="end">178.0000</text>
<text transform="translate(125 420.2) rotate(-23) scale(1 1)" text-anchor="end">177.0000</text>
<text transform="translate(138.8 427.3) rotate(-23) scale(1 1)" text-anchor="end">176.0000</text>
<text transform="translate(153.1 434.6) rotate(-23) scale(1 1)" text-anchor="end">175.0000</text>
<text transform="translate(168 442.3) rotate(-23) scale(1 1)" text-anchor="end">174.0000</text>
<text transform="translate(183.5 450.3) rotate(-23) scale(1 1)" text-anchor="end">173.0000</text>
<text transform="translate(199.6 458.6) rotate(-23) scale(1 1)" text-anchor="end">172.0000</text>
<text transform="translate(216.5 467.2) rotate(-23) scale(1 1)" text-anchor="end">171.0000</text>
<text transform="translate(234.1 476.3) rotate(-23) scale(1 1)" text-anchor="end">170.0000</text>
<text transform="translate(247.1 473.8) rotate(27) scale(1 1)">80.0000</text>
<text transform="translate(264.4 463.2) rotate(27) scale(1 1)">81.0000</text>
<text transform="translate(280.8 453.2) rotate(27) scale(1 1)">82.0000</text>
<text transform="translate(296.4 443.6) rotate(27) scale(1 1)">83.0000</text>
<text transform="translate(311.3 434.5) rotate(27) scale(1 1)">84.0000</text>
<text transform="translate(325.5 425.8) rotate(27) scale(1 1)">85.0000</text>
<text transform="translate(339.1 417.5) rotate(27) scale(1 1)">86.0000</text>
<text transform="translate(352 409.6) rotate(27) scale(1 1)">87.0000</text>
<text transform="translate(364.4 402) rotate(27) scale(1 1)">88.0000</text>
<text transform="translate(376.3 394.7) rotate(27) scale(1 1)">89.0000</text>
<text transform="translate(387.7 387.7) rotate(27) scale(1 1)">90.0000</text>
</g>
<text transform="translate(87 438) rotate(29) scale(.72 1)" font-size="13" fill="#222">B:Temperature</text>
<text transform="translate(348 446) rotate(-30) scale(.78 1)" font-size="12" fill="#222">A:Time</text>
<rect x="453.5" y="48.5" width="112" height="233" fill="#fff" stroke="#000" stroke-width="1"/>
<defs><linearGradient id="sm" x1="0" y1="0" x2="0" y2="1"><stop offset="0" stop-color="#FF8C00"/><stop offset=".55" stop-color="#FFEBCC"/><stop offset=".75" stop-color="#F2E0D8"/><stop offset="1" stop-color="#C48DD6"/></linearGradient></defs>
<rect x="460" y="78" width="11" height="11" fill="url(#sm)"/>
<g font-size="13.3" fill="#000">
<text x="458" y="65.6">Plot Legend</text>
<text x="479" y="88.2">Surface Mesh</text>
<text x="496" y="105.2">80.1822</text>
<text x="496" y="122.1">79.7692</text>
<text x="496" y="138.9">79.3563</text>
<text x="496" y="155.8">78.9433</text>
<text x="496" y="172.7">78.5303</text>
<text x="496" y="189.6">78.1173</text>
<text x="496" y="206.4">77.7043</text>
<text x="496" y="223.3">77.2913</text>
<text x="496" y="240.2">76.8783</text>
<text x="496" y="257">76.4653</text>
<text x="496" y="273.9">76.0524</text>
</g>
<rect x="477" y="102.2" width="11" height="3.7" fill="#FF8C00"/>
<rect x="477" y="112.0" width="11" height="7.1" fill="#FF8C00"/>
<rect x="477" y="119.1" width="11" height="3.7" fill="#FF9D26"/>
<rect x="477" y="128.8" width="11" height="7.1" fill="#FF9D26"/>
<rect x="477" y="135.9" width="11" height="3.7" fill="#FFB14F"/>
<rect x="477" y="145.7" width="11" height="7.1" fill="#FFB14F"/>
<rect x="477" y="152.8" width="11" height="3.7" fill="#FFC77D"/>
<rect x="477" y="162.6" width="11" height="7.1" fill="#FFC77D"/>
<rect x="477" y="169.7" width="11" height="3.7" fill="#FFE2B4"/>
<rect x="477" y="179.5" width="11" height="7.1" fill="#FFE2B4"/>
<rect x="477" y="186.6" width="11" height="3.7" fill="#F2E0D8"/>
<rect x="477" y="196.3" width="11" height="7.1" fill="#F2E0D8"/>
<rect x="477" y="203.4" width="11" height="3.7" fill="#DDB5DD"/>
<rect x="477" y="213.2" width="11" height="7.1" fill="#DDB5DD"/>
<rect x="477" y="220.3" width="11" height="3.7" fill="#C48DD6"/>
<rect x="477" y="230.1" width="11" height="7.1" fill="#C48DD6"/>
<rect x="477" y="237.2" width="11" height="3.7" fill="#AE5ED0"/>
<rect x="477" y="246.9" width="11" height="7.1" fill="#AE5ED0"/>
<rect x="477" y="254.0" width="11" height="3.7" fill="#9530CC"/>
<rect x="477" y="263.8" width="11" height="7.1" fill="#9530CC"/>
<g>
<path d="M41.8 524L41.8 503" stroke="#2b2b78" stroke-width="2.2"/>
<path d="M38.8 504.5L41.8 497.5L44.8 504.5Z" fill="#2b2b78"/>
<path d="M41.8 523.5L30 520" stroke="#3a8a3a" stroke-width="2.2"/>
<path d="M31.5 517.6L25.8 519.6L30.6 522.6Z" fill="#3a8a3a"/>
<path d="M41.8 523.5L52 519.5" stroke="#8a3c3c" stroke-width="2.2"/>
<path d="M50.5 517L56 519L51.5 522Z" fill="#8a3c3c"/>
<text x="37.8" y="495" font-size="10.5" fill="#333">Z</text>
<text x="56" y="523" font-size="10.5" fill="#333">X</text>
<text x="18.2" y="523" font-size="10.5" fill="#333">Y</text>
</g>
<g>
<path fill="#bdbdbd" fill-rule="evenodd" d="M507 540a31 12.4 0 1 0 62 0a31 12.4 0 1 0 -62 0ZM514.4 539a23.6 7.5 0 1 0 47.2 0a23.6 7.5 0 1 0 -47.2 0Z"/>
<path d="M520.1 512.9L539.5 516.5L539.5 542.3L521.6 535.6Z" fill="#f08282"/>
<path d="M539.5 516.5L554.8 512.2L554.3 532.3L539.5 542.3Z" fill="#82c282"/>
<path d="M520.1 512.9L536.6 509.4L554.8 512.2L539.5 516.5Z" fill="#8a8af2"/>
<text transform="translate(525.3 534.5) skewY(10) scale(.78 1.2)" font-size="12.5" fill="#fff">B</text>
<text transform="translate(544.6 533.5) skewY(-20) scale(.7 1.2)" font-size="12.5" fill="#fff">L</text>
</g>
</svg>
<div class="abs" style="left:0;top:3px;width:580px;text-align:center;font-weight:bold;font-size:32px;letter-spacing:-.35px;color:#000;-webkit-text-stroke:.5px #000">Surface Plot</div>
<div class="abs" style="left:7px;top:544px;font-size:17.5px;letter-spacing:-.08px;color:#000">Least Squares Means</div>
<div id="split"></div>

<div id="panel">
 <!-- header -->
 <div class="abs" style="left:0;top:1px;width:249px;height:23px;background:linear-gradient(#f5f7fa,#dfe5ed 50%,#c0ccdc);border:1px solid #eef2f7;border-radius:3px 4px 0 0;box-shadow:inset 0 -1px 0 #aebdd1"></div>
 <div class="abs" style="left:7px;top:6px;font-size:12px;font-weight:bold;color:#15428b">Plot</div>
 <div class="abs" style="left:230px;top:6px;width:14px;height:14px;border:1px solid #c3cedd;border-radius:2px;background:linear-gradient(#f7f9fb,#d3dbe6)"></div>
 <div class="abs" style="left:236px;top:10px;width:0;height:0;border-top:3px solid transparent;border-bottom:3px solid transparent;border-right:3.5px solid #000"></div>
 <!-- banner -->
 <div class="abs" style="left:1px;top:24px;width:246px;height:24px;background:linear-gradient(#8a1a20 0%,#9a2a1e 12%,#c0641a 32%,#eaa90c 50%,#f7d200 66%,#f3c800 80%,#b84a18 90%,#8e2222 100%);border-left:1px solid #666;border-bottom:1px solid #555"></div>
 <div class="abs" style="left:87px;top:28.5px;font-size:14px;color:#fff;letter-spacing:.6px;transform:scaleX(1.32);transform-origin:0 0;text-shadow:1px 1px 1px #4a2000">3D P<span style="font-size:11.2px">LOT</span></div>
 <!-- icon -->
 <div class="abs" style="left:7px;top:56px;width:20px;height:20px;border:1px solid #a8a8a8;background:linear-gradient(135deg,#fff,#e4e4e4)"></div>
 <svg class="abs" style="left:7px;top:56px" width="20" height="20"><path d="M2.3 17.6L17.7 2.2" stroke="#222" stroke-width="1.2"/><g stroke="#f00" stroke-width="1.1"><path d="M2.9 12.4h3M4.4 10.9v3M10 11.4h3M11.5 9.9v3M10.6 5h3M12.1 3.5v3M14.4 4.8h3M15.9 3.3v3"/></g></svg>
 <!-- dropdown -->
 <div class="abs" style="left:34px;top:54px;width:198px;height:24px;border:1px solid #a7b6cc;border-radius:4px;background:linear-gradient(#f7f9fc,#e3e8f0 45%,#c3cfdf)"></div>
 <div class="abs" style="left:217px;top:55px;width:2px;height:22px;background:#aebbd0;border-right:1px solid #f4f6fa"></div>
 <svg class="abs" style="left:219px;top:62px" width="10" height="8"><path d="M1.5 2L5 5.5L8.5 2" stroke="#111" stroke-width="1" fill="none"/></svg>
 <div class="abs" style="left:38px;top:59px;font-size:12px;font-weight:bold;color:#000">Surface Plot</div>
 <div class="abs" style="left:235px;top:58px;width:8px;height:16px;background:linear-gradient(90deg,#4fb83c,#7fdc6a,#4fb83c);border:1px solid #55a845"></div>
 <!-- grid -->
 <div class="abs" style="left:2px;top:85px;width:242px;height:306px;border:1px solid #a9b8cc;background:#d6dee9"></div>
 <div class="abs" style="left:3px;top:85px;width:240px;height:19px;background:#d5dde8;border-top:1px solid #a9b8cc;border-bottom:1px solid #a9b8cc"></div>
 <div class="abs mb" style="left:5px;top:88px"></div>
 <div class="abs cat" style="left:22px;top:88px">(X-Axis)</div>
 <div class="abs" style="left:19px;top:104px;width:104px;height:18px;background:#edf0f4;border-bottom:1px dotted #cdd8e6;"></div>
 <div class="abs" style="left:123px;top:104px;width:120px;height:18px;background:#fff;border-left:1px dotted #cdd8e6;border-bottom:1px dotted #cdd8e6;"></div>
 <div class="abs pl" style="left:36px;top:106px">Autoscale</div>
 <div class="abs ck" style="left:127px;top:106px"></div>
 <svg class="abs" style="left:127px;top:106px" width="13" height="13"><path d="M3.2 6.3L5.6 8.8L10 4.2" stroke="#000" stroke-width="1.6" fill="none"/></svg>
 <div class="abs" style="left:19px;top:122px;width:104px;height:17px;background:#edf0f4;border-bottom:1px dotted #cdd8e6;"></div>
 <div class="abs" style="left:123px;top:122px;width:120px;height:17px;background:#fff;border-left:1px dotted #cdd8e6;border-bottom:1px dotted #cdd8e6;"></div>
 <div class="abs pl" style="left:36px;top:123px">Begin</div>
 <div class="abs pv" style="left:128px;top:124px">80</div>
 <div class="abs" style="left:19px;top:139px;width:104px;height:17px;background:#edf0f4;border-bottom:1px dotted #cdd8e6;"></div>
 <div class="abs" style="left:123px;top:139px;width:120px;height:17px;background:#fff;border-left:1px dotted #cdd8e6;border-bottom:1px dotted #cdd8e6;"></div>
 <div class="abs pl" style="left:36px;top:140px">End</div>
 <div class="abs pv" style="left:128px;top:141px">90</div>
 <div class="abs" style="left:19px;top:156px;width:104px;height:20px;background:#edf0f4;"></div>
 <div class="abs" style="left:123px;top:156px;width:120px;height:20px;background:#fff;border-left:1px dotted #cdd8e6;"></div>
 <div class="abs pl" style="left:36px;top:159px">Factor</div>
 <div class="abs pv" style="left:128px;top:159px">A:Time</div>
 <div class="abs ddb" style="left:226px;top:158px"></div>
 <svg class="abs" style="left:226px;top:158px" width="15" height="14"><path d="M4 5.5L7.5 9L11 5.5" stroke="#222" stroke-width="1.1" fill="none"/></svg>
 <div class="abs" style="left:3px;top:175px;width:240px;height:19px;background:#d5dde8;border-top:1px solid #a9b8cc;border-bottom:1px solid #a9b8cc"></div>
 <div class="abs mb" style="left:5px;top:178px"></div>
 <div class="abs cat" style="left:22px;top:178px">(Y-Axis)</div>
 <div class="abs" style="left:19px;top:194px;width:104px;height:18px;background:#edf0f4;border-bottom:1px dotted #cdd8e6;"></div>
 <div class="abs" style="left:123px;top:194px;width:120px;height:18px;background:#fff;border-left:1px dotted #cdd8e6;border-bottom:1px dotted #cdd8e6;"></div>
 <div class="abs pl" style="left:36px;top:196px">Autoscale</div>
 <div class="abs ck" style="left:127px;top:196px"></div>
 <svg class="abs" style="left:127px;top:196px" width="13" height="13"><path d="M3.2 6.3L5.6 8.8L10 4.2" stroke="#000" stroke-width="1.6" fill="none"/></svg>
 <div class="abs" style="left:19px;top:212px;width:104px;height:17px;background:#edf0f4;border-bottom:1px dotted #cdd8e6;"></div>
 <div class="abs" style="left:123px;top:212px;width:120px;height:17px;background:#fff;border-left:1px dotted #cdd8e6;border-bottom:1px dotted #cdd8e6;"></div>
 <div class="abs pl" style="left:36px;top:213px">Begin</div>
 <div class="abs pv" style="left:128px;top:214px">170</div>
 <div class="abs" style="left:19px;top:229px;width:104px;height:17px;background:#edf0f4;border-bottom:1px dotted #cdd8e6;"></div>
 <div class="abs" style="left:123px;top:229px;width:120px;height:17px;background:#fff;border-left:1px dotted #cdd8e6;border-bottom:1px dotted #cdd8e6;"></div>
 <div class="abs pl" style="left:36px;top:230px">End</div>
 <div class="abs pv" style="left:128px;top:231px">180</div>
 <div class="abs" style="left:19px;top:246px;width:104px;height:20px;background:#edf0f4;"></div>
 <div class="abs" style="left:123px;top:246px;width:120px;height:20px;background:#fff;border-left:1px dotted #cdd8e6;"></div>
 <div class="abs pl" style="left:36px;top:249px">Factor</div>
 <div class="abs pv" style="left:128px;top:249px">B:Temperature</div>
 <div class="abs ddb" style="left:226px;top:248px"></div>
 <svg class="abs" style="left:226px;top:248px" width="15" height="14"><path d="M4 5.5L7.5 9L11 5.5" stroke="#222" stroke-width="1.1" fill="none"/></svg>
 <div class="abs" style="left:3px;top:265px;width:240px;height:19px;background:#d5dde8;border-top:1px solid #a9b8cc;border-bottom:1px solid #a9b8cc"></div>
 <div class="abs mb" style="left:5px;top:268px"></div>
 <div class="abs cat" style="left:22px;top:268px">(Z-Axis)</div>
 <div class="abs" style="left:19px;top:284px;width:104px;height:18px;background:#edf0f4;border-bottom:1px dotted #cdd8e6;"></div>
 <div class="abs" style="left:123px;top:284px;width:120px;height:18px;background:#fff;border-left:1px dotted #cdd8e6;border-bottom:1px dotted #cdd8e6;"></div>
 <div class="abs pl" style="left:36px;top:286px">Autoscale</div>
 <div class="abs ck" style="left:127px;top:286px"></div>
 <svg class="abs" style="left:127px;top:286px" width="13" height="13"><path d="M3.2 6.3L5.6 8.8L10 4.2" stroke="#000" stroke-width="1.6" fill="none"/></svg>
 <div class="abs" style="left:19px;top:302px;width:104px;height:17px;background:#edf0f4;border-bottom:1px dotted #cdd8e6;"></div>
 <div class="abs" style="left:123px;top:302px;width:120px;height:17px;background:#fff;border-left:1px dotted #cdd8e6;border-bottom:1px dotted #cdd8e6;"></div>
 <div class="abs pl" style="left:36px;top:303px">Begin</div>
 <div class="abs pv" style="left:128px;top:304px">76.052360210224...</div>
 <div class="abs" style="left:19px;top:319px;width:104px;height:17px;background:#edf0f4;"></div>
 <div class="abs" style="left:123px;top:319px;width:120px;height:17px;background:#fff;border-left:1px dotted #cdd8e6;"></div>
 <div class="abs pl" style="left:36px;top:320px">End</div>
 <div class="abs pv" style="left:128px;top:321px">80.182226911615...</div>
 <div class="abs" style="left:3px;top:335px;width:240px;height:19px;background:#d5dde8;border-top:1px solid #a9b8cc;border-bottom:1px solid #a9b8cc"></div>
 <div class="abs mb" style="left:5px;top:338px"></div>
 <div class="abs cat" style="left:22px;top:338px">General</div>
 <div class="abs" style="left:19px;top:354px;width:104px;height:20px;background:#edf0f4;border-bottom:1px dotted #cdd8e6;"></div>
 <div class="abs" style="left:123px;top:354px;width:120px;height:20px;background:#fff;border-left:1px dotted #cdd8e6;border-bottom:1px dotted #cdd8e6;"></div>
 <div class="abs pl" style="left:36px;top:357px">Display Factors</div>
 <div class="abs pv" style="left:128px;top:357px">Actual</div>
 <div class="abs ddb" style="left:226px;top:356px"></div>
 <svg class="abs" style="left:226px;top:356px" width="15" height="14"><path d="M4 5.5L7.5 9L11 5.5" stroke="#222" stroke-width="1.1" fill="none"/></svg>
 <div class="abs" style="left:19px;top:374px;width:104px;height:17px;background:#edf0f4;"></div>
 <div class="abs" style="left:123px;top:374px;width:120px;height:17px;background:#fff;border-left:1px dotted #cdd8e6;"></div>
 <div class="abs pl" style="left:36px;top:375px">Factor Values</div>
 <div class="abs pv" style="left:128px;top:375px;color:#0000e0;text-decoration:underline">Set Values</div>
 <!-- splitter -->
 <div class="abs" style="left:2px;top:393px;width:242px;height:7px;border:1px solid #c5cfdc;border-radius:2px;background:linear-gradient(#f3f5f9,#d2dae6)"></div>
 <!-- analysis -->
 <div class="abs" style="left:2px;top:403px;width:242px;height:130px;border:1px solid #8c8c8c;background:#fff"></div>
 <div class="abs" style="left:3px;top:404px;width:239px;height:19px;background:#000;color:#fff;font-size:11px;font-weight:bold;text-align:center;line-height:19px;letter-spacing:.6px">Analysis Summary</div>
 <div class="abs" style="left:7px;top:426px;font-size:11.5px;font-weight:bold;letter-spacing:.1px">Significant Terms</div>
 <div class="abs" style="left:3px;top:441px;width:239px;height:1px;background:#e2e2e2"></div>
 <div class="abs" style="left:3px;top:459px;width:239px;height:1px;background:#e2e2e2"></div>
 <div class="abs" style="left:3px;top:477px;width:239px;height:1px;background:#e2e2e2"></div>
 <div class="abs" style="left:3px;top:495px;width:239px;height:1px;background:#e2e2e2"></div>
 <div class="abs" style="left:3px;top:513px;width:239px;height:1px;background:#e2e2e2"></div>
 <div class="abs" style="left:123px;top:441px;width:1px;height:91px;background:#e2e2e2"></div>
 <div class="abs" style="left:7px;top:444px;font-size:11.5px;font-weight:bold;letter-spacing:.6px">Term</div>
 <div class="abs" style="left:128px;top:444px;font-size:11.5px;font-weight:bold;letter-spacing:.2px">Coefficient</div>
 <div class="abs" style="left:7px;top:462px;font-size:11px;letter-spacing:.2px;color:#f00">A:Time</div>
 <div class="abs" style="left:128px;top:462px;font-size:11px;color:#000">0.994975</div>
 <div class="abs" style="left:7px;top:480px;font-size:11px;letter-spacing:.2px;color:#f00">B:Temperature</div>
 <div class="abs" style="left:128px;top:480px;font-size:11px;color:#000">0.515165</div>
 <div class="abs" style="left:7px;top:498px;font-size:11px;letter-spacing:.2px;color:#f00">A &#8226; A</div>
 <div class="abs" style="left:128px;top:498px;font-size:11px;color:#000">-1.376250</div>
 <div class="abs" style="left:7px;top:516px;font-size:11px;letter-spacing:.2px;color:#f00">B &#8226; B</div>
 <div class="abs" style="left:128px;top:516px;font-size:11px;color:#000">-1.001250</div>
 <!-- footer -->
 <div class="abs" style="left:2px;top:536px;width:242px;height:26px;border:1px solid #aebcd0;background:#f1f3f6"></div>
 <svg class="abs" style="left:7px;top:541px" width="17" height="17"><defs><linearGradient id="dg" x1="0" y1="0" x2="0" y2="1"><stop offset="0" stop-color="#a04a10"/><stop offset=".5" stop-color="#f0c010"/><stop offset="1" stop-color="#a04a10"/></linearGradient></defs><rect x="5" y="1.5" width="11" height="14" fill="#999"/><rect x="4.5" y="0.5" width="10.5" height="14" fill="#f4f6fb" stroke="#333"/><rect x="0" y="3" width="12" height="7.5" fill="url(#dg)"/><text x="3.2" y="9.5" font-size="7.5" font-weight="bold" fill="#fff">D</text></svg>
 <div class="abs" style="left:29px;top:543px;font-size:10.5px;color:#0000ee;text-decoration:underline">Reduced Model!Yield</div>
 <svg class="abs" style="left:223px;top:541px" width="16" height="17"><rect x="1.5" y="2.5" width="13" height="13" fill="#dce6f4" stroke="#5a6d8a"/><path d="M3 9l3 3l7-10" stroke="#1a4fa0" stroke-width="2" fill="none"/><path d="M4 5h3M9 13h4" stroke="#7a8aa0"/></svg>
</div>

</body></html>
